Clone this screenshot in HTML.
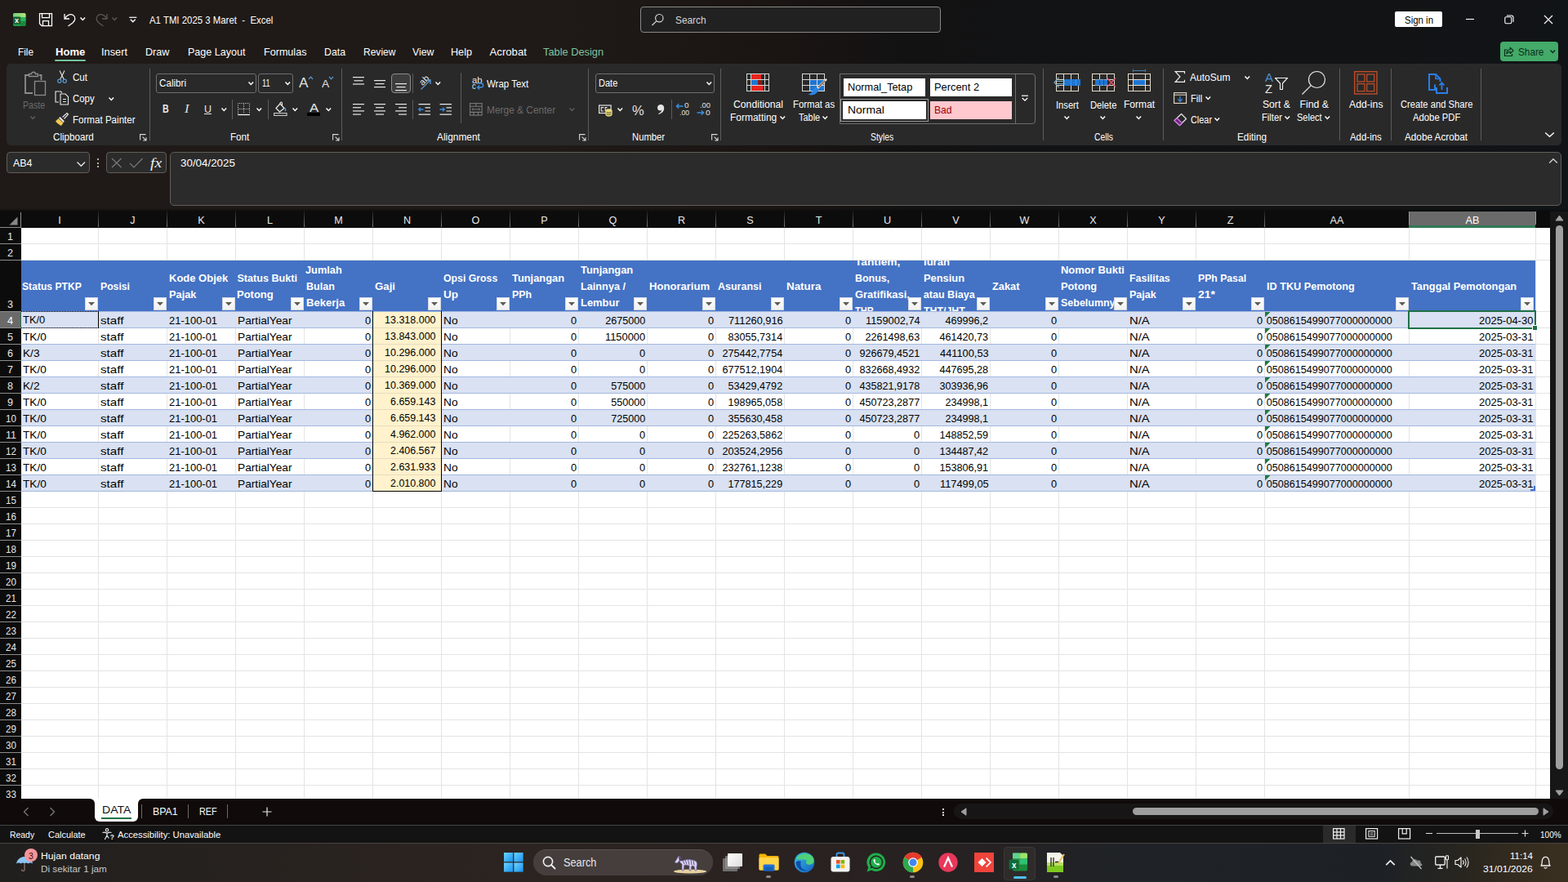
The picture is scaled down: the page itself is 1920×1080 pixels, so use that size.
<!DOCTYPE html>
<html lang="id"><head><meta charset="utf-8"><title>A1 TMI 2025 3 Maret - Excel</title>
<style>
html,body{margin:0;padding:0;}
body{width:1920px;height:1080px;overflow:hidden;position:relative;background:#1c1715;font-family:"Liberation Sans",sans-serif;}
.b{position:absolute;box-sizing:border-box;display:block;}
.t{position:absolute;white-space:pre;line-height:20px;transform-origin:0 50%;display:block;}
</style></head><body>
<div class="b" style="left:0;top:0;width:1920px;height:259px;background:linear-gradient(90deg,#1f1a17 0%,#1f1a17 35%,#1a1412 50%,#121213 58%,#111416 100%);"></div>
<svg class="b" style="left:16px;top:16px;" width="16" height="16" viewBox="0 0 16 16"><defs><linearGradient id="xg" x1="0" y1="0" x2="1" y2="0"><stop offset="0" stop-color="#6fd07a"/><stop offset="1" stop-color="#b4e37c"/></linearGradient></defs>
<rect x="0" y="0" width="15.5" height="16" rx="1.8" fill="#1f9a48"/>
<path d="M0 1.8 Q0 0 1.8 0 H13.7 Q15.5 0 15.5 1.8 V5 H0 Z" fill="url(#xg)"/>
<rect x="9" y="5" width="6.5" height="5" fill="#2fb35a"/>
<path d="M9 10 H15.5 V14.2 Q15.5 16 13.7 16 H9 Z" fill="#178a3e"/>
<rect x="0" y="4.6" width="9.2" height="9" rx="1" fill="#155f35"/></svg>
<span class="t" style="left:18.10px;top:15px;font-size:9px;color:#fff;font-weight:bold;">x</span>
<svg class="b" style="left:47px;top:15px;" width="18" height="18" viewBox="0 0 18 18"><path d="M1.5 1.5 H16.5 V16.5 H4 L1.5 14 Z" fill="none" stroke="#fff" stroke-width="1.25"/><path d="M4.5 1.5 V6.5 H13.5 V1.5 M5.5 16.5 V10.5 H12.5 V16.5" fill="none" stroke="#fff" stroke-width="1.25"/></svg>
<svg class="b" style="left:77px;top:15px;" width="17" height="18" viewBox="0 0 17 18"><path d="M2 2 V8 H8" fill="none" stroke="#fff" stroke-width="1.3"/><path d="M2.5 7.5 C5 3 9.5 1.5 12.5 3.5 C16 6 15.5 10 12 13 L6.5 17" fill="none" stroke="#fff" stroke-width="1.3"/></svg>
<svg class="b" style="left:97.0px;top:20.3px;" width="8.6" height="6" viewBox="0 0 8.6 6"><path d="M1.5 1.54 L4.3 4.46 L7.1 1.54" fill="none" stroke="#fff" stroke-width="1.45" stroke-linecap="butt" stroke-linejoin="miter"/></svg>
<svg class="b" style="left:116px;top:15px;" width="17" height="18" viewBox="0 0 17 18"><path d="M15 2 V8 H9" fill="none" stroke="#5a5754" stroke-width="1.3"/><path d="M14.5 7.5 C12 3 7.5 1.5 4.5 3.5 C1 6 1.5 10 5 13 L10.5 17" fill="none" stroke="#5a5754" stroke-width="1.3"/></svg>
<svg class="b" style="left:136.2px;top:20.3px;" width="8.6" height="6" viewBox="0 0 8.6 6"><path d="M1.5 1.54 L4.3 4.46 L7.1 1.54" fill="none" stroke="#5a5754" stroke-width="1.45" stroke-linecap="butt" stroke-linejoin="miter"/></svg>
<svg class="b" style="left:157px;top:19px;" width="12" height="9" viewBox="0 0 12 9"><path d="M1.2 2.3 H10.3" stroke="#fff" stroke-width="1.2" fill="none"/><path d="M2.8 4.8 L5.75 7.7 L8.7 4.8" stroke="#fff" stroke-width="1.4" fill="none"/></svg>
<span class="t" style="left:182.70px;top:15px;font-size:12.8px;color:#fff;transform:scaleX(0.8911);">A1 TMI 2025 3 Maret  -  Excel</span>
<div class="b" style="left:784px;top:8px;width:368px;height:32px;border:1px solid #8a8886;border-radius:4px;background:#212121;"></div>
<svg class="b" style="left:797px;top:16px;" width="17" height="17" viewBox="0 0 17 17"><circle cx="10.3" cy="6.2" r="4.7" fill="none" stroke="#d6d6d6" stroke-width="1.2"/><path d="M7 9.6 L1.5 15" stroke="#d6d6d6" stroke-width="1.3" fill="none"/></svg>
<span class="t" style="left:826.70px;top:15px;font-size:13.2px;color:#d6d6d6;transform:scaleX(0.8993);">Search</span>
<div class="b" style="left:1708px;top:14px;width:58px;height:19px;background:#fff;border-radius:2px;"></div>
<span class="t" style="left:1719.50px;top:15px;font-size:12.3px;color:#000;transform:scaleX(0.9307);">Sign in</span>
<svg class="b" style="left:1794px;top:22px;" width="12" height="3" viewBox="0 0 12 3"><path d="M1 1.5 H11" stroke="#fff" stroke-width="1.1"/></svg>
<svg class="b" style="left:1842px;top:18px;" width="12" height="12" viewBox="0 0 12 12"><rect x="0.8" y="2.8" width="8" height="8" rx="1.5" fill="none" stroke="#fff" stroke-width="1.1"/><path d="M3 1 H8.5 Q11 1 11 3.5 V9" fill="none" stroke="#fff" stroke-width="1.1"/></svg>
<svg class="b" style="left:1890px;top:18px;" width="12" height="12" viewBox="0 0 12 12"><path d="M1 1 L11 11 M11 1 L1 11" stroke="#fff" stroke-width="1.1"/></svg>
<span class="t" style="left:22.00px;top:54px;font-size:13.2px;color:#fff;transform:scaleX(0.8926);">File</span>
<span class="t" style="left:124.00px;top:54px;font-size:13.2px;color:#fff;transform:scaleX(0.9697);">Insert</span>
<span class="t" style="left:177.50px;top:54px;font-size:13.2px;color:#fff;transform:scaleX(0.9561);">Draw</span>
<span class="t" style="left:229.50px;top:54px;font-size:13.2px;color:#fff;transform:scaleX(0.9512);">Page Layout</span>
<span class="t" style="left:322.50px;top:54px;font-size:13.2px;color:#fff;transform:scaleX(0.9544);">Formulas</span>
<span class="t" style="left:396.50px;top:54px;font-size:13.2px;color:#fff;transform:scaleX(0.9324);">Data</span>
<span class="t" style="left:444.50px;top:54px;font-size:13.2px;color:#fff;transform:scaleX(0.9116);">Review</span>
<span class="t" style="left:504.50px;top:54px;font-size:13.2px;color:#fff;transform:scaleX(0.9327);">View</span>
<span class="t" style="left:551.50px;top:54px;font-size:13.2px;color:#fff;transform:scaleX(0.9573);">Help</span>
<span class="t" style="left:599.50px;top:54px;font-size:13.2px;color:#fff;">Acrobat</span>
<span class="t" style="left:67.70px;top:54px;font-size:13.2px;color:#fff;font-weight:bold;transform:scaleX(0.9901);">Home</span>
<div class="b" style="left:67px;top:72.6px;width:38px;height:2.6px;background:#74c39b;border-radius:1.3px;"></div>
<span class="t" style="left:665.30px;top:54px;font-size:13.2px;color:#7fc49f;transform:scaleX(0.9721);">Table Design</span>
<div class="b" style="left:1837px;top:51px;width:71px;height:24px;background:#43aa69;border-radius:4px;"></div>
<svg class="b" style="left:1841px;top:56px;" width="13" height="14" viewBox="0 0 13 14"><path d="M4.5 5 H1.5 V12.5 H10.5 V10" fill="none" stroke="#0b2e1a" stroke-width="1.2"/><path d="M3.8 10 C4 6.5 6 4.8 8.2 4.8 V2.2 L12 6 L8.2 9.6 V7.2 C6.5 7.2 5 8 3.8 10 Z" fill="none" stroke="#0b2e1a" stroke-width="1.1" stroke-linejoin="round"/></svg>
<span class="t" style="left:1858.80px;top:54px;font-size:13.2px;color:#0b2e1a;transform:scaleX(0.8918);">Share</span>
<svg class="b" style="left:1896.5px;top:60px;" width="8.6" height="6" viewBox="0 0 8.6 6"><path d="M1.5 1.54 L4.3 4.46 L7.1 1.54" fill="none" stroke="#0b2e1a" stroke-width="1.45" stroke-linecap="butt" stroke-linejoin="miter"/></svg>
<div class="b" style="left:8px;top:78px;width:1904px;height:100px;background:#292929;border-radius:5px;"></div>
<svg class="b" style="left:28px;top:87px;" width="29" height="32" viewBox="0 0 29 32"><path d="M8 5 H3 V27 H12" fill="none" stroke="#8c8c8c" stroke-width="1.8"/><path d="M20 5 H22.5 V11" fill="none" stroke="#8c8c8c" stroke-width="1.8"/><path d="M7.5 6.5 V3.5 H10.5 C10.5 0.5 15.5 0.5 15.5 3.5 H18.5 V6.5 Z" fill="none" stroke="#8c8c8c" stroke-width="1.4"/><rect x="14.5" y="12.5" width="13" height="17" fill="none" stroke="#8c8c8c" stroke-width="1.3"/></svg>
<span class="t" style="left:27.90px;top:119px;font-size:12.3px;color:#6b6b6b;transform:scaleX(0.8615);">Paste</span>
<svg class="b" style="left:36.2px;top:141.3px;" width="8.6" height="6" viewBox="0 0 8.6 6"><path d="M1.5 1.54 L4.3 4.46 L7.1 1.54" fill="none" stroke="#5e5e5e" stroke-width="1.45" stroke-linecap="butt" stroke-linejoin="miter"/></svg>
<svg class="b" style="left:70px;top:86px;" width="12" height="17" viewBox="0 0 12 17"><path d="M3 0.5 L8.2 11 M9 0.5 L3.8 11" stroke="#e8e8e8" stroke-width="1.1" fill="none"/><circle cx="2.8" cy="13.3" r="2.1" fill="none" stroke="#5b9bd5" stroke-width="1.2"/><circle cx="9.2" cy="13.3" r="2.1" fill="none" stroke="#5b9bd5" stroke-width="1.2"/></svg>
<span class="t" style="left:89.00px;top:85px;font-size:12.3px;color:#fff;transform:scaleX(0.9411);">Cut</span>
<svg class="b" style="left:67px;top:111px;" width="18" height="18" viewBox="0 0 18 18"><path d="M5 14 H1 V1 H7.5 L9 2.5" fill="none" stroke="#e8e8e8" stroke-width="1.1"/><path d="M7 4 H13 L16.5 7.5 V17 H7 Z" fill="none" stroke="#e8e8e8" stroke-width="1.1"/><path d="M10 10.5 H14 M10 13.5 H14" stroke="#e8e8e8" stroke-width="1.1"/></svg>
<span class="t" style="left:89.00px;top:111px;font-size:12.3px;color:#fff;transform:scaleX(0.9262);">Copy</span>
<svg class="b" style="left:131.89999999999998px;top:117.5px;" width="8.6" height="6" viewBox="0 0 8.6 6"><path d="M1.5 1.54 L4.3 4.46 L7.1 1.54" fill="none" stroke="#fff" stroke-width="1.45" stroke-linecap="butt" stroke-linejoin="miter"/></svg>
<svg class="b" style="left:67px;top:137px;" width="18" height="18" viewBox="0 0 18 18"><path d="M9.5 6.5 L15 1.5 L16.5 3 L11.5 8.5" fill="none" stroke="#e8e8e8" stroke-width="1.2"/><path d="M6.5 6 L12 11.5 L10.5 13 L5 7.5 Z" fill="#e8e8e8"/><path d="M4.5 8 L1 11.5 C3 14 5.5 16 8 17 L10.5 13.5 Z" fill="#f2c94c"/></svg>
<span class="t" style="left:89.00px;top:137px;font-size:12.3px;color:#fff;transform:scaleX(0.9418);">Format Painter</span>
<span class="t" style="left:64.60px;top:158px;font-size:12.3px;color:#fff;transform:scaleX(0.9460);">Clipboard</span>
<svg class="b" style="left:171px;top:164px;" width="9" height="9" viewBox="0 0 9 9"><path d="M0.6 7.5 V0.6 H7.5 M8 4.2 V8 H4.2 M8 8 L3.6 3.6" fill="none" stroke="#d8d8d8" stroke-width="1.1"/></svg>
<div class="b" style="left:183px;top:84px;width:1px;height:88px;background:#5c5c5c;"></div>
<div class="b" style="left:191px;top:90px;width:123px;height:24px;border:1px solid #6e6e6e;border-radius:3px;background:#292929;"></div>
<span class="t" style="left:195.00px;top:92px;font-size:12.3px;color:#fff;transform:scaleX(0.9464);">Calibri</span>
<svg class="b" style="left:303.0px;top:99.3px;" width="8.6" height="6" viewBox="0 0 8.6 6"><path d="M1.5 1.54 L4.3 4.46 L7.1 1.54" fill="none" stroke="#fff" stroke-width="1.45" stroke-linecap="butt" stroke-linejoin="miter"/></svg>
<div class="b" style="left:316px;top:90px;width:43px;height:24px;border:1px solid #6e6e6e;border-radius:3px;background:#292929;"></div>
<span class="t" style="left:320.50px;top:92px;font-size:12.3px;color:#fff;transform:scaleX(0.7444);">11</span>
<svg class="b" style="left:348.0px;top:99.3px;" width="8.6" height="6" viewBox="0 0 8.6 6"><path d="M1.5 1.54 L4.3 4.46 L7.1 1.54" fill="none" stroke="#fff" stroke-width="1.45" stroke-linecap="butt" stroke-linejoin="miter"/></svg>
<span class="t" style="left:366.30px;top:91px;font-size:17.4px;color:#e0e0e0;transform:scaleX(0.9901);">A</span>
<svg class="b" style="left:377px;top:93px;" width="7" height="5" viewBox="0 0 7 5"><path d="M1 4 L3.5 1.2 L6 4" fill="none" stroke="#5b9bd5" stroke-width="1.2"/></svg>
<span class="t" style="left:393.80px;top:93px;font-size:12.8px;color:#e0e0e0;transform:scaleX(1.0768);">A</span>
<svg class="b" style="left:402px;top:93px;" width="7" height="5" viewBox="0 0 7 5"><path d="M1 1 L3.5 3.8 L6 1" fill="none" stroke="#5b9bd5" stroke-width="1.2"/></svg>
<span class="t" style="left:199.30px;top:123px;font-size:14px;color:#e8e8e8;font-weight:bold;transform:scaleX(0.7612);">B</span>
<span class="t" style="left:225.88px;top:123px;font-size:14.5px;color:#e0e0e0;font-style:italic;font-family:'Liberation Serif',serif;transform:scaleX(1.1327);">I</span>
<span class="t" style="left:250.00px;top:124px;font-size:13.5px;color:#e8e8e8;transform:scaleX(0.9227);">U</span>
<div class="b" style="left:250px;top:139px;width:9px;height:1px;background:#e8e8e8;"></div>
<svg class="b" style="left:269.5px;top:131.3px;" width="8.6" height="6" viewBox="0 0 8.6 6"><path d="M1.5 1.54 L4.3 4.46 L7.1 1.54" fill="none" stroke="#fff" stroke-width="1.45" stroke-linecap="butt" stroke-linejoin="miter"/></svg>
<div class="b" style="left:284px;top:122px;width:1px;height:24px;background:#5c5c5c;"></div>
<svg class="b" style="left:291px;top:126px;" width="16" height="16" viewBox="0 0 16 16"><path d="M0.5 13 V0.5 H14.5 V13" fill="none" stroke="#d8d8d8" stroke-width="1" stroke-dasharray="1 1.33"/><path d="M7.5 1.5 V13 M1.5 7.5 H14" stroke="#d8d8d8" stroke-width="1" stroke-dasharray="1 1.33"/><path d="M0 14.5 H15" stroke="#fff" stroke-width="1.2"/></svg>
<svg class="b" style="left:313.2px;top:131.3px;" width="8.6" height="6" viewBox="0 0 8.6 6"><path d="M1.5 1.54 L4.3 4.46 L7.1 1.54" fill="none" stroke="#fff" stroke-width="1.45" stroke-linecap="butt" stroke-linejoin="miter"/></svg>
<div class="b" style="left:328px;top:122px;width:1px;height:24px;background:#5c5c5c;"></div>
<svg class="b" style="left:335px;top:124px;" width="17" height="18" viewBox="0 0 17 18"><path d="M8 3 L13 8.5 L7.5 13 L3 8.5 Z" fill="none" stroke="#e8e8e8" stroke-width="1.2" stroke-linejoin="round"/><path d="M8 3 C8 0.5 10.5 0.5 10.5 3 V5.5" fill="none" stroke="#e8e8e8" stroke-width="1.1"/><path d="M13.5 8 C15 10 15 11.5 13.8 12" fill="none" stroke="#5b9bd5" stroke-width="1.4"/><rect x="0.6" y="14.6" width="15.5" height="2.8" fill="none" stroke="#d8d8d8" stroke-width="1"/></svg>
<svg class="b" style="left:357.2px;top:131.3px;" width="8.6" height="6" viewBox="0 0 8.6 6"><path d="M1.5 1.54 L4.3 4.46 L7.1 1.54" fill="none" stroke="#fff" stroke-width="1.45" stroke-linecap="butt" stroke-linejoin="miter"/></svg>
<span class="t" style="left:378.80px;top:122px;font-size:14.5px;color:#e8e8e8;transform:scaleX(1.1572);">A</span>
<div class="b" style="left:376px;top:138px;width:16px;height:4px;background:#000;"></div>
<svg class="b" style="left:398.2px;top:131.3px;" width="8.6" height="6" viewBox="0 0 8.6 6"><path d="M1.5 1.54 L4.3 4.46 L7.1 1.54" fill="none" stroke="#fff" stroke-width="1.45" stroke-linecap="butt" stroke-linejoin="miter"/></svg>
<span class="t" style="left:281.70px;top:158px;font-size:12.3px;color:#fff;transform:scaleX(0.9472);">Font</span>
<svg class="b" style="left:407px;top:164px;" width="9" height="9" viewBox="0 0 9 9"><path d="M0.6 7.5 V0.6 H7.5 M8 4.2 V8 H4.2 M8 8 L3.6 3.6" fill="none" stroke="#d8d8d8" stroke-width="1.1"/></svg>
<div class="b" style="left:418px;top:84px;width:1px;height:88px;background:#5c5c5c;"></div>
<svg class="b" style="left:432px;top:94px;" width="14" height="12.600000000000001" viewBox="0 0 14 12.600000000000001"><rect x="0" y="0.0" width="14" height="1.2" fill="#e8e8e8"/><rect x="1.5" y="4.2" width="11" height="1.2" fill="#e8e8e8"/><rect x="0" y="8.4" width="14" height="1.2" fill="#e8e8e8"/></svg>
<svg class="b" style="left:458px;top:98px;" width="14" height="12" viewBox="0 0 14 12"><rect x="0" y="0" width="14" height="1.2" fill="#e8e8e8"/><rect x="1.5" y="4" width="11" height="1.2" fill="#e8e8e8"/><rect x="0" y="8" width="14" height="1.2" fill="#e8e8e8"/></svg>
<div class="b" style="left:479px;top:90px;width:24px;height:24px;border:1px solid #8c8c8c;border-radius:4px;background:#3d3d3d;"></div>
<svg class="b" style="left:484px;top:101.5px;" width="14" height="12" viewBox="0 0 14 12"><rect x="0" y="0" width="14" height="1.2" fill="#e8e8e8"/><rect x="1.5" y="4" width="11" height="1.2" fill="#e8e8e8"/><rect x="0" y="8" width="14" height="1.2" fill="#e8e8e8"/></svg>
<div class="b" style="left:505px;top:90px;width:1px;height:24px;background:#5c5c5c;"></div>
<span class="t" style="left:513px;top:88px;font-size:11px;color:#e8e8e8;transform:rotate(-45deg);transform-origin:50% 50%;">ab</span>
<svg class="b" style="left:514px;top:96px;" width="15" height="15" viewBox="0 0 15 15"><path d="M1.5 13.5 L13 2 M8 2 H13 V7" fill="none" stroke="#5b9bd5" stroke-width="1.3"/></svg>
<svg class="b" style="left:532.2px;top:99.3px;" width="8.6" height="6" viewBox="0 0 8.6 6"><path d="M1.5 1.54 L4.3 4.46 L7.1 1.54" fill="none" stroke="#fff" stroke-width="1.45" stroke-linecap="butt" stroke-linejoin="miter"/></svg>
<svg class="b" style="left:432px;top:127px;" width="14" height="16.6" viewBox="0 0 14 16.6"><rect x="0" y="0.0" width="14" height="1.2" fill="#e8e8e8"/><rect x="0" y="4.15" width="10" height="1.2" fill="#e8e8e8"/><rect x="0" y="8.3" width="14" height="1.2" fill="#e8e8e8"/><rect x="0" y="12.450000000000001" width="10" height="1.2" fill="#e8e8e8"/></svg>
<svg class="b" style="left:458px;top:127px;" width="14" height="16.6" viewBox="0 0 14 16.6"><rect x="0" y="0.0" width="14" height="1.2" fill="#e8e8e8"/><rect x="2" y="4.15" width="10" height="1.2" fill="#e8e8e8"/><rect x="0" y="8.3" width="14" height="1.2" fill="#e8e8e8"/><rect x="2" y="12.450000000000001" width="10" height="1.2" fill="#e8e8e8"/></svg>
<svg class="b" style="left:484px;top:127px;" width="14" height="16.6" viewBox="0 0 14 16.6"><rect x="0" y="0.0" width="14" height="1.2" fill="#e8e8e8"/><rect x="4" y="4.15" width="10" height="1.2" fill="#e8e8e8"/><rect x="0" y="8.3" width="14" height="1.2" fill="#e8e8e8"/><rect x="4" y="12.450000000000001" width="10" height="1.2" fill="#e8e8e8"/></svg>
<div class="b" style="left:505px;top:122px;width:1px;height:24px;background:#5c5c5c;"></div>
<svg class="b" style="left:512px;top:127px;" width="16" height="14" viewBox="0 0 16 14"><path d="M0.5 0.6 H15 M8.5 4.8 H15 M8.5 9 H15 M0.5 13.2 H15" stroke="#e8e8e8" stroke-width="1.2"/><path d="M6.5 7 H0.8 M3 4.6 L0.6 7 L3 9.4" fill="none" stroke="#3b8fe0" stroke-width="1.3"/></svg>
<svg class="b" style="left:538px;top:127px;" width="16" height="14" viewBox="0 0 16 14"><path d="M0.5 0.6 H15 M8.5 4.8 H15 M8.5 9 H15 M0.5 13.2 H15" stroke="#e8e8e8" stroke-width="1.2"/><path d="M0.5 7 H6.2 M4 4.6 L6.4 7 L4 9.4" fill="none" stroke="#3b8fe0" stroke-width="1.3"/></svg>
<div class="b" style="left:564px;top:89px;width:1px;height:62px;background:#5c5c5c;"></div>
<span class="t" style="left:577.50px;top:89px;font-size:10px;color:#e8e8e8;transform:scaleX(1.1236);">ab</span>
<span class="t" style="left:577.80px;top:96px;font-size:10px;color:#e8e8e8;transform:scaleX(0.9400);">c</span>
<svg class="b" style="left:583px;top:101px;" width="10" height="9" viewBox="0 0 10 9"><path d="M0.5 1 H6 C9.5 1 9.5 6 6 6 H2 M4.2 3.6 L1.6 6 L4.2 8.4" fill="none" stroke="#3b8fe0" stroke-width="1.3"/></svg>
<span class="t" style="left:595.80px;top:93px;font-size:12.3px;color:#fff;transform:scaleX(0.9323);">Wrap Text</span>
<svg class="b" style="left:575px;top:126px;" width="16" height="16" viewBox="0 0 16 16"><rect x="0.6" y="0.6" width="14.5" height="14.5" fill="none" stroke="#7a7a7a" stroke-width="1.1"/><path d="M0.6 4.2 H15 M0.6 11.4 H15 M7.8 0.6 V4.2 M5 11.4 V15 M10.5 11.4 V15" stroke="#7a7a7a" stroke-width="1.1" fill="none"/><path d="M3 7.8 H12.5 M4.6 6.2 L3 7.8 L4.6 9.4 M11 6.2 L12.6 7.8 L11 9.4" stroke="#7a7a7a" stroke-width="1" fill="none"/></svg>
<span class="t" style="left:595.80px;top:125px;font-size:12.3px;color:#6b6b6b;transform:scaleX(0.9696);">Merge &amp; Center</span>
<svg class="b" style="left:696.2px;top:131.3px;" width="8.6" height="6" viewBox="0 0 8.6 6"><path d="M1.5 1.54 L4.3 4.46 L7.1 1.54" fill="none" stroke="#5e5e5e" stroke-width="1.45" stroke-linecap="butt" stroke-linejoin="miter"/></svg>
<span class="t" style="left:535.20px;top:158px;font-size:12.3px;color:#fff;transform:scaleX(0.9652);">Alignment</span>
<svg class="b" style="left:709px;top:164px;" width="9" height="9" viewBox="0 0 9 9"><path d="M0.6 7.5 V0.6 H7.5 M8 4.2 V8 H4.2 M8 8 L3.6 3.6" fill="none" stroke="#d8d8d8" stroke-width="1.1"/></svg>
<div class="b" style="left:720px;top:84px;width:1px;height:88px;background:#5c5c5c;"></div>
<div class="b" style="left:729px;top:90px;width:146px;height:24px;border:1px solid #6e6e6e;border-radius:3px;background:#292929;"></div>
<span class="t" style="left:732.70px;top:92px;font-size:12.3px;color:#fff;transform:scaleX(0.8967);">Date</span>
<svg class="b" style="left:863.7px;top:99.3px;" width="8.6" height="6" viewBox="0 0 8.6 6"><path d="M1.5 1.54 L4.3 4.46 L7.1 1.54" fill="none" stroke="#fff" stroke-width="1.45" stroke-linecap="butt" stroke-linejoin="miter"/></svg>
<svg class="b" style="left:733px;top:128px;" width="17" height="15" viewBox="0 0 17 15"><rect x="0.6" y="1" width="14.5" height="9.5" fill="none" stroke="#e8e8e8" stroke-width="1.2"/><path d="M6.3 3.6 H3.2 V8 H6.3 M10.5 3.6 H8.2 V8 H9" fill="none" stroke="#e8e8e8" stroke-width="1.1"/><path d="M8.8 7.2 C8.8 5.2 16.2 5.2 16.2 7.2 V12.6 C16.2 14.8 8.8 14.8 8.8 12.6 Z" fill="#eadd7c" stroke="#eadd7c" stroke-width="0.8"/><path d="M9.6 9.3 C11 10.3 14 10.3 15.4 9.3 M9.6 11.6 C11 12.6 14 12.6 15.4 11.6" fill="none" stroke="#3a3520" stroke-width="0.9"/></svg>
<svg class="b" style="left:755.2px;top:131.3px;" width="8.6" height="6" viewBox="0 0 8.6 6"><path d="M1.5 1.54 L4.3 4.46 L7.1 1.54" fill="none" stroke="#fff" stroke-width="1.45" stroke-linecap="butt" stroke-linejoin="miter"/></svg>
<span class="t" style="left:774.30px;top:126px;font-size:17px;color:#e0e0e0;transform:scaleX(0.9716);">%</span>
<svg class="b" style="left:804px;top:127px;" width="10" height="14" viewBox="0 0 10 14"><path d="M5.2 1 C7.8 1 9.2 3 9.2 5.6 C9.2 9.2 6.6 12 2.6 13 L2.2 12 C4.6 11 6 9.6 6.2 7.8 C5.6 8.2 5 8.4 4.4 8.4 C2.4 8.4 1 7 1 4.9 C1 2.7 2.8 1 5.2 1 Z" fill="#e4e4e4"/></svg>
<div class="b" style="left:822px;top:122px;width:1px;height:24px;background:#5c5c5c;"></div>
<span class="t" style="left:838.00px;top:119px;font-size:9.5px;color:#e0e0e0;transform:scaleX(1.0431);">0</span>
<span class="t" style="left:831.50px;top:128px;font-size:9.5px;color:#e0e0e0;transform:scaleX(0.9087);">.00</span>
<svg class="b" style="left:827px;top:126px;" width="10" height="8" viewBox="0 0 10 8"><path d="M9.5 4 H1.5 M4.3 1.2 L1.3 4 L4.3 6.8" fill="none" stroke="#3b8fe0" stroke-width="1.3"/></svg>
<span class="t" style="left:857.00px;top:119px;font-size:9.5px;color:#e0e0e0;transform:scaleX(0.9845);">.00</span>
<span class="t" style="left:864.30px;top:128px;font-size:9.5px;color:#e0e0e0;transform:scaleX(1.0811);">0</span>
<svg class="b" style="left:853px;top:134px;" width="10" height="8" viewBox="0 0 10 8"><path d="M0.5 4 H8.5 M5.7 1.2 L8.7 4 L5.7 6.8" fill="none" stroke="#3b8fe0" stroke-width="1.3"/></svg>
<span class="t" style="left:773.70px;top:158px;font-size:12.3px;color:#fff;transform:scaleX(0.9153);">Number</span>
<svg class="b" style="left:871px;top:164px;" width="9" height="9" viewBox="0 0 9 9"><path d="M0.6 7.5 V0.6 H7.5 M8 4.2 V8 H4.2 M8 8 L3.6 3.6" fill="none" stroke="#d8d8d8" stroke-width="1.1"/></svg>
<div class="b" style="left:882px;top:84px;width:1px;height:88px;background:#5c5c5c;"></div>
<svg class="b" style="left:914px;top:90px;" width="29" height="23" viewBox="0 0 29 23"><rect x="6" y="0.5" width="12" height="7" fill="#e8231f"/><rect x="6" y="7.5" width="8" height="7" fill="#1f76d2"/><rect x="14" y="7.5" width="5" height="7" fill="#8a1a14"/><rect x="6" y="14.5" width="14.5" height="7" fill="#e8231f"/>
<rect x="0.5" y="0.5" width="27" height="21" fill="none" stroke="#d8d8d8" stroke-width="1"/>
<path d="M1 7.5 H27 M1 14.5 H27 M5.5 1 V21 M22.5 1 V21" stroke="#d8d8d8" stroke-width="1" fill="none"/></svg>
<span class="t" style="left:897.70px;top:118px;font-size:12.3px;color:#fff;transform:scaleX(0.9922);">Conditional</span>
<span class="t" style="left:894.00px;top:134px;font-size:12.3px;color:#fff;transform:scaleX(0.9737);">Formatting</span>
<svg class="b" style="left:954.2px;top:141px;" width="8.6" height="6" viewBox="0 0 8.6 6"><path d="M1.5 1.54 L4.3 4.46 L7.1 1.54" fill="none" stroke="#fff" stroke-width="1.45" stroke-linecap="butt" stroke-linejoin="miter"/></svg>
<svg class="b" style="left:982px;top:90px;" width="31" height="28" viewBox="0 0 31 28"><rect x="10" y="7.5" width="17.5" height="14" fill="#1f76d2"/>
<rect x="0.5" y="0.5" width="27" height="21" fill="none" stroke="#d8d8d8" stroke-width="1"/>
<path d="M1 7.5 H27 M1 14.5 H27 M9.5 1 V21 M18.5 1 V21" stroke="#d8d8d8" stroke-width="1" fill="none"/>
<path d="M29.3 7.6 L18.5 18.5" stroke="#efe6dc" stroke-width="2.6" stroke-linecap="round"/><path d="M28 9 L20.5 16.5" stroke="#7a4a2a" stroke-width="1.1" stroke-linecap="round"/>
<path d="M18 16.5 C14.5 17 13.5 20 12.5 22 C11.5 24 9.5 25 7.5 25.5 C12 27.5 18 26.5 20.5 19.5 Z" fill="#2a86e6"/></svg>
<span class="t" style="left:970.80px;top:118px;font-size:12.3px;color:#fff;transform:scaleX(0.9232);">Format as</span>
<span class="t" style="left:978.20px;top:134px;font-size:12.3px;color:#fff;transform:scaleX(0.8912);">Table</span>
<svg class="b" style="left:1006.3000000000001px;top:141px;" width="8.6" height="6" viewBox="0 0 8.6 6"><path d="M1.5 1.54 L4.3 4.46 L7.1 1.54" fill="none" stroke="#fff" stroke-width="1.45" stroke-linecap="butt" stroke-linejoin="miter"/></svg>
<div class="b" style="left:1028px;top:90px;width:240px;height:62px;border:1px solid #6e6e6e;border-radius:0 4px 4px 0;"></div>
<div class="b" style="left:1243px;top:90px;width:1px;height:62px;background:#6e6e6e;"></div>
<div class="b" style="left:1033px;top:96px;width:100px;height:22px;background:#fff;"></div>
<div class="b" style="left:1139px;top:96px;width:100px;height:22px;background:#fff;"></div>
<div class="b" style="left:1029px;top:121px;width:108px;height:28px;border:1px solid #9a9a9a;"></div>
<div class="b" style="left:1032px;top:124px;width:102px;height:22px;background:#fff;"></div>
<div class="b" style="left:1139px;top:124px;width:100px;height:22px;background:#ffc7ce;"></div>
<span class="t" style="left:1037.70px;top:97px;font-size:13.3px;color:#000;transform:scaleX(0.9578);">Normal_Tetap</span>
<span class="t" style="left:1143.70px;top:97px;font-size:13.3px;color:#000;transform:scaleX(0.9671);">Percent 2</span>
<span class="t" style="left:1037.70px;top:125px;font-size:13.3px;color:#000;transform:scaleX(1.0453);">Normal</span>
<span class="t" style="left:1143.70px;top:125px;font-size:13.3px;color:#9c0006;transform:scaleX(0.9103);">Bad</span>
<svg class="b" style="left:1250px;top:116px;" width="10" height="9" viewBox="0 0 10 9"><path d="M1 1.2 H9" stroke="#fff" stroke-width="1.2" fill="none"/><path d="M1.8 4 L5 7.2 L8.2 4" stroke="#fff" stroke-width="1.3" fill="none"/></svg>
<span class="t" style="left:1066.20px;top:158px;font-size:12.3px;color:#fff;transform:scaleX(0.8421);">Styles</span>
<div class="b" style="left:1277px;top:84px;width:1px;height:88px;background:#5c5c5c;"></div>
<svg class="b" style="left:1289px;top:90px;" width="36" height="23" viewBox="0 0 36 23"><rect x="4.5" y="0.5" width="27" height="21" fill="none" stroke="#e8dccc" stroke-width="1"/><path d="M4.5 7.5 H31.5 M4.5 14.5 H31.5 M13.5 0.5 V21.5 M22.5 0.5 V21.5" stroke="#e8dccc" stroke-width="1" fill="none"/>
<rect x="14" y="7" width="20" height="8" fill="#1f76d2"/><path d="M22.5 7 V15 M28.5 7 V15" stroke="#3f92e8" stroke-width="1"/>
<path d="M15 9.5 H5 M15 12.5 H5 M7.5 5 L2 11 L7.5 17" fill="none" stroke="#7aaec6" stroke-width="1.2"/></svg>
<span class="t" style="left:1292.70px;top:119px;font-size:12.3px;color:#fff;transform:scaleX(0.9073);">Insert</span>
<svg class="b" style="left:1302.0px;top:141.3px;" width="8.6" height="6" viewBox="0 0 8.6 6"><path d="M1.5 1.54 L4.3 4.46 L7.1 1.54" fill="none" stroke="#fff" stroke-width="1.45" stroke-linecap="butt" stroke-linejoin="miter"/></svg>
<svg class="b" style="left:1336px;top:90px;" width="32" height="23" viewBox="0 0 32 23"><rect x="1.5" y="0.5" width="27" height="21" fill="none" stroke="#e8dccc" stroke-width="1"/><path d="M1.5 7.5 H28.5 M1.5 14.5 H28.5 M10.5 0.5 V21.5 M19.5 0.5 V21.5" stroke="#e8dccc" stroke-width="1" fill="none"/>
<rect x="5" y="7.5" width="15" height="7" fill="#1f76d2"/><path d="M10.5 7.5 V14.5 M15.5 7.5 V14.5" stroke="#0b4f9e" stroke-width="1"/>
<path d="M19.5 5.5 L30 16.5 M30 5.5 L19.5 16.5" stroke="#e05570" stroke-width="1.4"/></svg>
<span class="t" style="left:1334.60px;top:119px;font-size:12.3px;color:#fff;transform:scaleX(0.9115);">Delete</span>
<svg class="b" style="left:1346.3px;top:141.3px;" width="8.6" height="6" viewBox="0 0 8.6 6"><path d="M1.5 1.54 L4.3 4.46 L7.1 1.54" fill="none" stroke="#fff" stroke-width="1.45" stroke-linecap="butt" stroke-linejoin="miter"/></svg>
<svg class="b" style="left:1381px;top:84px;" width="29" height="29" viewBox="0 0 29 29"><path d="M6.5 2.5 H21.5 M6.5 0.5 V4.5 M21.5 0.5 V4.5" stroke="#3c7eae" stroke-width="1" fill="none"/><rect x="0.5" y="6.5" width="27" height="21" fill="none" stroke="#e8dccc" stroke-width="1"/><path d="M0.5 13.5 H27.5 M0.5 20.5 H27.5 M6.5 6.5 V27.5 M21.5 6.5 V27.5" stroke="#e8dccc" stroke-width="1" fill="none"/>
<rect x="7" y="14" width="14" height="6" fill="#1f76d2"/></svg>
<span class="t" style="left:1376.20px;top:118px;font-size:12.3px;color:#fff;transform:scaleX(0.9805);">Format</span>
<svg class="b" style="left:1390.1000000000001px;top:140.7px;" width="8.6" height="6" viewBox="0 0 8.6 6"><path d="M1.5 1.54 L4.3 4.46 L7.1 1.54" fill="none" stroke="#fff" stroke-width="1.45" stroke-linecap="butt" stroke-linejoin="miter"/></svg>
<span class="t" style="left:1339.60px;top:158px;font-size:12.3px;color:#fff;transform:scaleX(0.8377);">Cells</span>
<div class="b" style="left:1424px;top:84px;width:1px;height:88px;background:#5c5c5c;"></div>
<svg class="b" style="left:1438px;top:87px;" width="14" height="14" viewBox="0 0 14 14"><path d="M12.5 3.2 V0.6 H1.2 L7 7 L1.2 13.4 H12.5 V10.8" fill="none" stroke="#f0f0f0" stroke-width="1.15" stroke-linejoin="miter"/></svg>
<span class="t" style="left:1457.20px;top:85px;font-size:12.3px;color:#fff;transform:scaleX(0.9766);">AutoSum</span>
<svg class="b" style="left:1523.2px;top:91.5px;" width="8.6" height="6" viewBox="0 0 8.6 6"><path d="M1.5 1.54 L4.3 4.46 L7.1 1.54" fill="none" stroke="#fff" stroke-width="1.45" stroke-linecap="butt" stroke-linejoin="miter"/></svg>
<svg class="b" style="left:1437px;top:113px;" width="17" height="14" viewBox="0 0 17 14"><rect x="0.6" y="0.6" width="15" height="12.8" fill="none" stroke="#e8dccc" stroke-width="1.1"/><path d="M0.6 3.2 H15.6" stroke="#e8dccc" stroke-width="1"/><path d="M8 5 V11 M5.3 8.4 L8 11.2 L10.7 8.4" fill="none" stroke="#3b8fe0" stroke-width="1.3"/></svg>
<span class="t" style="left:1457.70px;top:111px;font-size:12.3px;color:#fff;transform:scaleX(0.9101);">Fill</span>
<svg class="b" style="left:1474.5px;top:117.3px;" width="8.6" height="6" viewBox="0 0 8.6 6"><path d="M1.5 1.54 L4.3 4.46 L7.1 1.54" fill="none" stroke="#fff" stroke-width="1.45" stroke-linecap="butt" stroke-linejoin="miter"/></svg>
<svg class="b" style="left:1436px;top:138px;" width="18" height="17" viewBox="0 0 18 17"><path d="M10.5 1.5 L16.5 7.5 L8.5 15.5 L2 9.5 Z" fill="none" stroke="#e8e8e8" stroke-width="1.2" stroke-linejoin="round"/><path d="M5.2 6.8 L11.5 12.8 L8.5 15.5 L2 9.5 Z" fill="#6a2a78" stroke="#d070e0" stroke-width="1.3" stroke-linejoin="round"/></svg>
<span class="t" style="left:1457.70px;top:137px;font-size:12.3px;color:#fff;transform:scaleX(0.8861);">Clear</span>
<svg class="b" style="left:1486.3px;top:143.3px;" width="8.6" height="6" viewBox="0 0 8.6 6"><path d="M1.5 1.54 L4.3 4.46 L7.1 1.54" fill="none" stroke="#fff" stroke-width="1.45" stroke-linecap="butt" stroke-linejoin="miter"/></svg>
<span class="t" style="left:1549.00px;top:85px;font-size:15px;color:#4a90d0;">A</span>
<span class="t" style="left:1549.00px;top:99px;font-size:15px;color:#e8e8e8;transform:scaleX(0.9836);">Z</span>
<svg class="b" style="left:1560px;top:94px;" width="18" height="17" viewBox="0 0 18 17"><path d="M1.5 1.5 H16.5 L10.5 8 V15.5 H7.5 V8 Z" fill="none" stroke="#f0f0f0" stroke-width="1.15" stroke-linejoin="round"/></svg>
<span class="t" style="left:1546.20px;top:118px;font-size:12.3px;color:#fff;transform:scaleX(0.9885);">Sort &amp;</span>
<span class="t" style="left:1545.00px;top:134px;font-size:12.3px;color:#fff;transform:scaleX(0.9145);">Filter</span>
<svg class="b" style="left:1572.2px;top:141px;" width="8.6" height="6" viewBox="0 0 8.6 6"><path d="M1.5 1.54 L4.3 4.46 L7.1 1.54" fill="none" stroke="#fff" stroke-width="1.45" stroke-linecap="butt" stroke-linejoin="miter"/></svg>
<svg class="b" style="left:1593px;top:86px;" width="32" height="32" viewBox="0 0 32 32"><circle cx="19.5" cy="11.5" r="10" fill="none" stroke="#e8e8e8" stroke-width="1.2"/><path d="M12.3 18.7 L1.5 29.5" stroke="#e8e8e8" stroke-width="1.2"/></svg>
<span class="t" style="left:1591.40px;top:118px;font-size:12.3px;color:#fff;">Find &amp;</span>
<span class="t" style="left:1588.20px;top:134px;font-size:12.3px;color:#fff;transform:scaleX(0.8934);">Select</span>
<svg class="b" style="left:1621.3px;top:141px;" width="8.6" height="6" viewBox="0 0 8.6 6"><path d="M1.5 1.54 L4.3 4.46 L7.1 1.54" fill="none" stroke="#fff" stroke-width="1.45" stroke-linecap="butt" stroke-linejoin="miter"/></svg>
<span class="t" style="left:1514.60px;top:158px;font-size:12.3px;color:#fff;transform:scaleX(0.9573);">Editing</span>
<div class="b" style="left:1640px;top:84px;width:1px;height:88px;background:#5c5c5c;"></div>
<svg class="b" style="left:1658px;top:87px;" width="29" height="29" viewBox="0 0 29 29"><rect x="0.7" y="0.7" width="27.3" height="27.3" fill="none" stroke="#c8502a" stroke-width="1.3"/><rect x="4" y="4" width="9" height="9" fill="none" stroke="#c8502a" stroke-width="1.2"/><rect x="15.7" y="4" width="9" height="9" fill="none" stroke="#c8502a" stroke-width="1.2"/><rect x="4" y="15.7" width="9" height="9" fill="none" stroke="#c8502a" stroke-width="1.2"/><rect x="15.7" y="15.7" width="9" height="9" fill="none" stroke="#c8502a" stroke-width="1.2"/></svg>
<span class="t" style="left:1651.50px;top:118px;font-size:12.3px;color:#fff;transform:scaleX(0.9953);">Add-ins</span>
<span class="t" style="left:1652.50px;top:158px;font-size:12.3px;color:#fff;transform:scaleX(0.9293);">Add-ins</span>
<div class="b" style="left:1703px;top:84px;width:1px;height:88px;background:#5c5c5c;"></div>
<svg class="b" style="left:1748px;top:89px;" width="26" height="27" viewBox="0 0 26 27"><path d="M9 14.5 V21 H2 V2 H10 L15.5 7.5 V11" fill="none" stroke="#2b7de9" stroke-width="2"/><path d="M10 2 V7.5 H15.5" fill="none" stroke="#2b7de9" stroke-width="1.6"/><path d="M11 18 V25 H24 V18" fill="none" stroke="#2b7de9" stroke-width="2"/><path d="M17.5 21 V12.5 M14.5 15.3 L17.5 12.2 L20.5 15.3" fill="none" stroke="#2b7de9" stroke-width="1.8"/></svg>
<span class="t" style="left:1714.60px;top:118px;font-size:12.3px;color:#fff;transform:scaleX(0.9103);">Create and Share</span>
<span class="t" style="left:1729.60px;top:134px;font-size:12.3px;color:#fff;transform:scaleX(0.9184);">Adobe PDF</span>
<span class="t" style="left:1720.20px;top:158px;font-size:12.3px;color:#fff;transform:scaleX(0.9549);">Adobe Acrobat</span>
<div class="b" style="left:1813px;top:84px;width:1px;height:88px;background:#5c5c5c;"></div>
<svg class="b" style="left:1891px;top:161px;" width="13" height="8" viewBox="0 0 13 8"><path d="M1.2 1.5 L6.5 6.2 L11.8 1.5" fill="none" stroke="#fff" stroke-width="1.4"/></svg>
<div class="b" style="left:8px;top:186px;width:102px;height:26px;border:1px solid #625d58;border-radius:4px;background:#2b2b2b;"></div>
<span class="t" style="left:15.50px;top:190px;font-size:13.2px;color:#fff;transform:scaleX(0.9420);">AB4</span>
<svg class="b" style="left:93px;top:197px;" width="13" height="8" viewBox="0 0 13 8"><path d="M1.5 1.5 L6.3 6.3 L11 1.5" fill="none" stroke="#e8e8e8" stroke-width="1.3"/></svg>
<div class="b" style="left:119px;top:194px;width:2px;height:2px;background:#e0e0e0;border-radius:1px;"></div>
<div class="b" style="left:119px;top:198.5px;width:2px;height:2px;background:#e0e0e0;border-radius:1px;"></div>
<div class="b" style="left:119px;top:203px;width:2px;height:2px;background:#e0e0e0;border-radius:1px;"></div>
<div class="b" style="left:130px;top:186px;width:74px;height:26px;border:1px solid #625d58;border-radius:4px;background:#2b2b2b;"></div>
<svg class="b" style="left:136px;top:193px;" width="14" height="13" viewBox="0 0 14 13"><path d="M1 1 L12.5 12 M12.5 1 L1 12" stroke="#7a7a7a" stroke-width="1.2"/></svg>
<svg class="b" style="left:158px;top:193px;" width="18" height="13" viewBox="0 0 18 13"><path d="M1 7 L6 12 L16.5 1" fill="none" stroke="#7a7a7a" stroke-width="1.2"/></svg>
<span class="t" style="left:184.20px;top:190px;font-size:16px;color:#f0f0f0;font-style:italic;font-family:'Liberation Serif',serif;transform:scaleX(1.2197);">fx</span>
<div class="b" style="left:208px;top:186px;width:1704px;height:66px;border:1px solid #625d58;border-radius:5px;background:#2b2b2b;"></div>
<span class="t" style="left:220.50px;top:190px;font-size:13.2px;color:#fff;transform:scaleX(1.0141);">30/04/2025</span>
<svg class="b" style="left:1896px;top:193px;" width="12" height="8" viewBox="0 0 12 8"><path d="M1.2 6.5 L6 1.7 L10.8 6.5" fill="none" stroke="#d0d0d0" stroke-width="1.3"/></svg>
<div class="b" style="left:0px;top:259px;width:1920px;height:719px;background:#0c0c0c;"></div>
<div class="b" style="left:0;top:255px;width:1920px;height:4px;background:linear-gradient(rgba(12,12,12,0),rgba(12,12,12,1));"></div>
<div class="b" style="left:26px;top:279px;width:1872px;height:699px;background:#fff;"></div>
<div class="b" style="left:120px;top:279px;width:1px;height:699px;background:#e4e4e4;"></div>
<div class="b" style="left:204px;top:279px;width:1px;height:699px;background:#e4e4e4;"></div>
<div class="b" style="left:288px;top:279px;width:1px;height:699px;background:#e4e4e4;"></div>
<div class="b" style="left:372px;top:279px;width:1px;height:699px;background:#e4e4e4;"></div>
<div class="b" style="left:456px;top:279px;width:1px;height:699px;background:#e4e4e4;"></div>
<div class="b" style="left:540px;top:279px;width:1px;height:699px;background:#e4e4e4;"></div>
<div class="b" style="left:624px;top:279px;width:1px;height:699px;background:#e4e4e4;"></div>
<div class="b" style="left:708px;top:279px;width:1px;height:699px;background:#e4e4e4;"></div>
<div class="b" style="left:792px;top:279px;width:1px;height:699px;background:#e4e4e4;"></div>
<div class="b" style="left:876px;top:279px;width:1px;height:699px;background:#e4e4e4;"></div>
<div class="b" style="left:960px;top:279px;width:1px;height:699px;background:#e4e4e4;"></div>
<div class="b" style="left:1044px;top:279px;width:1px;height:699px;background:#e4e4e4;"></div>
<div class="b" style="left:1128px;top:279px;width:1px;height:699px;background:#e4e4e4;"></div>
<div class="b" style="left:1212px;top:279px;width:1px;height:699px;background:#e4e4e4;"></div>
<div class="b" style="left:1296px;top:279px;width:1px;height:699px;background:#e4e4e4;"></div>
<div class="b" style="left:1380px;top:279px;width:1px;height:699px;background:#e4e4e4;"></div>
<div class="b" style="left:1464px;top:279px;width:1px;height:699px;background:#e4e4e4;"></div>
<div class="b" style="left:1548px;top:279px;width:1px;height:699px;background:#e4e4e4;"></div>
<div class="b" style="left:1725px;top:279px;width:1px;height:699px;background:#e4e4e4;"></div>
<div class="b" style="left:1880px;top:279px;width:1px;height:699px;background:#e4e4e4;"></div>
<div class="b" style="left:26px;top:298px;width:1872px;height:1px;background:#e4e4e4;"></div>
<div class="b" style="left:26px;top:318px;width:1872px;height:1px;background:#e4e4e4;"></div>
<div class="b" style="left:26px;top:381px;width:1872px;height:1px;background:#e4e4e4;"></div>
<div class="b" style="left:26px;top:401px;width:1872px;height:1px;background:#e4e4e4;"></div>
<div class="b" style="left:26px;top:421px;width:1872px;height:1px;background:#e4e4e4;"></div>
<div class="b" style="left:26px;top:441px;width:1872px;height:1px;background:#e4e4e4;"></div>
<div class="b" style="left:26px;top:461px;width:1872px;height:1px;background:#e4e4e4;"></div>
<div class="b" style="left:26px;top:481px;width:1872px;height:1px;background:#e4e4e4;"></div>
<div class="b" style="left:26px;top:501px;width:1872px;height:1px;background:#e4e4e4;"></div>
<div class="b" style="left:26px;top:521px;width:1872px;height:1px;background:#e4e4e4;"></div>
<div class="b" style="left:26px;top:541px;width:1872px;height:1px;background:#e4e4e4;"></div>
<div class="b" style="left:26px;top:561px;width:1872px;height:1px;background:#e4e4e4;"></div>
<div class="b" style="left:26px;top:581px;width:1872px;height:1px;background:#e4e4e4;"></div>
<div class="b" style="left:26px;top:601px;width:1872px;height:1px;background:#e4e4e4;"></div>
<div class="b" style="left:26px;top:621px;width:1872px;height:1px;background:#e4e4e4;"></div>
<div class="b" style="left:26px;top:641px;width:1872px;height:1px;background:#e4e4e4;"></div>
<div class="b" style="left:26px;top:661px;width:1872px;height:1px;background:#e4e4e4;"></div>
<div class="b" style="left:26px;top:681px;width:1872px;height:1px;background:#e4e4e4;"></div>
<div class="b" style="left:26px;top:701px;width:1872px;height:1px;background:#e4e4e4;"></div>
<div class="b" style="left:26px;top:721px;width:1872px;height:1px;background:#e4e4e4;"></div>
<div class="b" style="left:26px;top:741px;width:1872px;height:1px;background:#e4e4e4;"></div>
<div class="b" style="left:26px;top:761px;width:1872px;height:1px;background:#e4e4e4;"></div>
<div class="b" style="left:26px;top:781px;width:1872px;height:1px;background:#e4e4e4;"></div>
<div class="b" style="left:26px;top:801px;width:1872px;height:1px;background:#e4e4e4;"></div>
<div class="b" style="left:26px;top:821px;width:1872px;height:1px;background:#e4e4e4;"></div>
<div class="b" style="left:26px;top:841px;width:1872px;height:1px;background:#e4e4e4;"></div>
<div class="b" style="left:26px;top:861px;width:1872px;height:1px;background:#e4e4e4;"></div>
<div class="b" style="left:26px;top:881px;width:1872px;height:1px;background:#e4e4e4;"></div>
<div class="b" style="left:26px;top:901px;width:1872px;height:1px;background:#e4e4e4;"></div>
<div class="b" style="left:26px;top:921px;width:1872px;height:1px;background:#e4e4e4;"></div>
<div class="b" style="left:26px;top:941px;width:1872px;height:1px;background:#e4e4e4;"></div>
<div class="b" style="left:26px;top:961px;width:1872px;height:1px;background:#e4e4e4;"></div>
<span class="t" style="left:71.25px;top:260px;font-size:12.6px;color:#e8e8e8;">I</span>
<div class="b" style="left:120px;top:258px;width:1px;height:20px;background:linear-gradient(#161616,#7a7a7a);"></div>
<span class="t" style="left:159.35px;top:260px;font-size:12.6px;color:#e8e8e8;">J</span>
<div class="b" style="left:204px;top:258px;width:1px;height:20px;background:linear-gradient(#161616,#7a7a7a);"></div>
<span class="t" style="left:242.29px;top:260px;font-size:12.6px;color:#e8e8e8;">K</span>
<div class="b" style="left:288px;top:258px;width:1px;height:20px;background:linear-gradient(#161616,#7a7a7a);"></div>
<span class="t" style="left:327.00px;top:260px;font-size:12.6px;color:#e8e8e8;">L</span>
<div class="b" style="left:372px;top:258px;width:1px;height:20px;background:linear-gradient(#161616,#7a7a7a);"></div>
<span class="t" style="left:409.26px;top:260px;font-size:12.6px;color:#e8e8e8;">M</span>
<div class="b" style="left:456px;top:258px;width:1px;height:20px;background:linear-gradient(#161616,#7a7a7a);"></div>
<span class="t" style="left:493.95px;top:260px;font-size:12.6px;color:#e8e8e8;">N</span>
<div class="b" style="left:540px;top:258px;width:1px;height:20px;background:linear-gradient(#161616,#7a7a7a);"></div>
<span class="t" style="left:577.60px;top:260px;font-size:12.6px;color:#e8e8e8;">O</span>
<div class="b" style="left:624px;top:258px;width:1px;height:20px;background:linear-gradient(#161616,#7a7a7a);"></div>
<span class="t" style="left:662.29px;top:260px;font-size:12.6px;color:#e8e8e8;">P</span>
<div class="b" style="left:708px;top:258px;width:1px;height:20px;background:linear-gradient(#161616,#7a7a7a);"></div>
<span class="t" style="left:745.60px;top:260px;font-size:12.6px;color:#e8e8e8;">Q</span>
<div class="b" style="left:792px;top:258px;width:1px;height:20px;background:linear-gradient(#161616,#7a7a7a);"></div>
<span class="t" style="left:829.95px;top:260px;font-size:12.6px;color:#e8e8e8;">R</span>
<div class="b" style="left:876px;top:258px;width:1px;height:20px;background:linear-gradient(#161616,#7a7a7a);"></div>
<span class="t" style="left:914.29px;top:260px;font-size:12.6px;color:#e8e8e8;">S</span>
<div class="b" style="left:960px;top:258px;width:1px;height:20px;background:linear-gradient(#161616,#7a7a7a);"></div>
<span class="t" style="left:998.66px;top:260px;font-size:12.6px;color:#e8e8e8;">T</span>
<div class="b" style="left:1044px;top:258px;width:1px;height:20px;background:linear-gradient(#161616,#7a7a7a);"></div>
<span class="t" style="left:1081.95px;top:260px;font-size:12.6px;color:#e8e8e8;">U</span>
<div class="b" style="left:1128px;top:258px;width:1px;height:20px;background:linear-gradient(#161616,#7a7a7a);"></div>
<span class="t" style="left:1166.29px;top:260px;font-size:12.6px;color:#e8e8e8;">V</span>
<div class="b" style="left:1212px;top:258px;width:1px;height:20px;background:linear-gradient(#161616,#7a7a7a);"></div>
<span class="t" style="left:1248.55px;top:260px;font-size:12.6px;color:#e8e8e8;">W</span>
<div class="b" style="left:1296px;top:258px;width:1px;height:20px;background:linear-gradient(#161616,#7a7a7a);"></div>
<span class="t" style="left:1334.29px;top:260px;font-size:12.6px;color:#e8e8e8;">X</span>
<div class="b" style="left:1380px;top:258px;width:1px;height:20px;background:linear-gradient(#161616,#7a7a7a);"></div>
<span class="t" style="left:1418.29px;top:260px;font-size:12.6px;color:#e8e8e8;">Y</span>
<div class="b" style="left:1464px;top:258px;width:1px;height:20px;background:linear-gradient(#161616,#7a7a7a);"></div>
<span class="t" style="left:1502.66px;top:260px;font-size:12.6px;color:#e8e8e8;">Z</span>
<div class="b" style="left:1548px;top:258px;width:1px;height:20px;background:linear-gradient(#161616,#7a7a7a);"></div>
<span class="t" style="left:1628.59px;top:260px;font-size:12.6px;color:#e8e8e8;">AA</span>
<div class="b" style="left:1725px;top:259px;width:155px;height:20px;background:#6a6a6a;"></div>
<div class="b" style="left:1725px;top:276px;width:155px;height:3px;background:#2f7a55;"></div>
<div class="b" style="left:1725px;top:259px;width:1px;height:16px;background:#9a9a9a;"></div>
<div class="b" style="left:1880px;top:259px;width:1px;height:16px;background:#9a9a9a;"></div>
<span class="t" style="left:1794.59px;top:260px;font-size:12.6px;color:#fff;">AB</span>
<div class="b" style="left:25px;top:260px;width:1px;height:19px;background:#8f8f8f;"></div>
<div class="b" style="left:25px;top:382px;width:1px;height:19px;background:#2f6e50;"></div>
<div class="b" style="left:0px;top:278px;width:26px;height:1px;background:#8c8c8c;"></div>
<svg class="b" style="left:8px;top:262px;" width="18" height="16" viewBox="0 0 18 16"><path d="M3.5 13.5 L13.5 3.5 L13.5 13.5 Z" fill="#86868c"/></svg>
<div class="b" style="left:0px;top:298px;width:26px;height:1px;background:#8c8c8c;"></div>
<span class="t" style="left:9.10px;top:280px;font-size:12.6px;color:#e8e8e8;">1</span>
<div class="b" style="left:0px;top:318px;width:26px;height:1px;background:#8c8c8c;"></div>
<span class="t" style="left:9.10px;top:300px;font-size:12.6px;color:#e8e8e8;">2</span>
<div class="b" style="left:0px;top:381px;width:26px;height:1px;background:#8c8c8c;"></div>
<span class="t" style="left:9.10px;top:363px;font-size:12.6px;color:#e8e8e8;">3</span>
<div class="b" style="left:0px;top:382px;width:25px;height:19px;background:#6a6a6a;"></div>
<div class="b" style="left:0px;top:401px;width:26px;height:1px;background:#8c8c8c;"></div>
<span class="t" style="left:9.10px;top:383px;font-size:12.6px;color:#fff;">4</span>
<div class="b" style="left:0px;top:421px;width:26px;height:1px;background:#8c8c8c;"></div>
<span class="t" style="left:9.10px;top:403px;font-size:12.6px;color:#e8e8e8;">5</span>
<div class="b" style="left:0px;top:441px;width:26px;height:1px;background:#8c8c8c;"></div>
<span class="t" style="left:9.10px;top:423px;font-size:12.6px;color:#e8e8e8;">6</span>
<div class="b" style="left:0px;top:461px;width:26px;height:1px;background:#8c8c8c;"></div>
<span class="t" style="left:9.10px;top:443px;font-size:12.6px;color:#e8e8e8;">7</span>
<div class="b" style="left:0px;top:481px;width:26px;height:1px;background:#8c8c8c;"></div>
<span class="t" style="left:9.10px;top:463px;font-size:12.6px;color:#e8e8e8;">8</span>
<div class="b" style="left:0px;top:501px;width:26px;height:1px;background:#8c8c8c;"></div>
<span class="t" style="left:9.10px;top:483px;font-size:12.6px;color:#e8e8e8;">9</span>
<div class="b" style="left:0px;top:521px;width:26px;height:1px;background:#8c8c8c;"></div>
<span class="t" style="left:6.55px;top:503px;font-size:12.6px;color:#e8e8e8;transform:scaleX(0.9203);">10</span>
<div class="b" style="left:0px;top:541px;width:26px;height:1px;background:#8c8c8c;"></div>
<span class="t" style="left:6.55px;top:523px;font-size:12.6px;color:#e8e8e8;transform:scaleX(0.9868);">11</span>
<div class="b" style="left:0px;top:561px;width:26px;height:1px;background:#8c8c8c;"></div>
<span class="t" style="left:6.55px;top:543px;font-size:12.6px;color:#e8e8e8;transform:scaleX(0.9203);">12</span>
<div class="b" style="left:0px;top:581px;width:26px;height:1px;background:#8c8c8c;"></div>
<span class="t" style="left:6.55px;top:563px;font-size:12.6px;color:#e8e8e8;transform:scaleX(0.9203);">13</span>
<div class="b" style="left:0px;top:601px;width:26px;height:1px;background:#8c8c8c;"></div>
<span class="t" style="left:6.55px;top:583px;font-size:12.6px;color:#e8e8e8;transform:scaleX(0.9203);">14</span>
<div class="b" style="left:0px;top:621px;width:26px;height:1px;background:#8c8c8c;"></div>
<span class="t" style="left:6.55px;top:603px;font-size:12.6px;color:#e8e8e8;transform:scaleX(0.9203);">15</span>
<div class="b" style="left:0px;top:641px;width:26px;height:1px;background:#8c8c8c;"></div>
<span class="t" style="left:6.55px;top:623px;font-size:12.6px;color:#e8e8e8;transform:scaleX(0.9203);">16</span>
<div class="b" style="left:0px;top:661px;width:26px;height:1px;background:#8c8c8c;"></div>
<span class="t" style="left:6.55px;top:643px;font-size:12.6px;color:#e8e8e8;transform:scaleX(0.9203);">17</span>
<div class="b" style="left:0px;top:681px;width:26px;height:1px;background:#8c8c8c;"></div>
<span class="t" style="left:6.55px;top:663px;font-size:12.6px;color:#e8e8e8;transform:scaleX(0.9203);">18</span>
<div class="b" style="left:0px;top:701px;width:26px;height:1px;background:#8c8c8c;"></div>
<span class="t" style="left:6.55px;top:683px;font-size:12.6px;color:#e8e8e8;transform:scaleX(0.9203);">19</span>
<div class="b" style="left:0px;top:721px;width:26px;height:1px;background:#8c8c8c;"></div>
<span class="t" style="left:6.55px;top:703px;font-size:12.6px;color:#e8e8e8;transform:scaleX(0.9203);">20</span>
<div class="b" style="left:0px;top:741px;width:26px;height:1px;background:#8c8c8c;"></div>
<span class="t" style="left:6.55px;top:723px;font-size:12.6px;color:#e8e8e8;transform:scaleX(0.9203);">21</span>
<div class="b" style="left:0px;top:761px;width:26px;height:1px;background:#8c8c8c;"></div>
<span class="t" style="left:6.55px;top:743px;font-size:12.6px;color:#e8e8e8;transform:scaleX(0.9203);">22</span>
<div class="b" style="left:0px;top:781px;width:26px;height:1px;background:#8c8c8c;"></div>
<span class="t" style="left:6.55px;top:763px;font-size:12.6px;color:#e8e8e8;transform:scaleX(0.9203);">23</span>
<div class="b" style="left:0px;top:801px;width:26px;height:1px;background:#8c8c8c;"></div>
<span class="t" style="left:6.55px;top:783px;font-size:12.6px;color:#e8e8e8;transform:scaleX(0.9203);">24</span>
<div class="b" style="left:0px;top:821px;width:26px;height:1px;background:#8c8c8c;"></div>
<span class="t" style="left:6.55px;top:803px;font-size:12.6px;color:#e8e8e8;transform:scaleX(0.9203);">25</span>
<div class="b" style="left:0px;top:841px;width:26px;height:1px;background:#8c8c8c;"></div>
<span class="t" style="left:6.55px;top:823px;font-size:12.6px;color:#e8e8e8;transform:scaleX(0.9203);">26</span>
<div class="b" style="left:0px;top:861px;width:26px;height:1px;background:#8c8c8c;"></div>
<span class="t" style="left:6.55px;top:843px;font-size:12.6px;color:#e8e8e8;transform:scaleX(0.9203);">27</span>
<div class="b" style="left:0px;top:881px;width:26px;height:1px;background:#8c8c8c;"></div>
<span class="t" style="left:6.55px;top:863px;font-size:12.6px;color:#e8e8e8;transform:scaleX(0.9203);">28</span>
<div class="b" style="left:0px;top:901px;width:26px;height:1px;background:#8c8c8c;"></div>
<span class="t" style="left:6.55px;top:883px;font-size:12.6px;color:#e8e8e8;transform:scaleX(0.9203);">29</span>
<div class="b" style="left:0px;top:921px;width:26px;height:1px;background:#8c8c8c;"></div>
<span class="t" style="left:6.55px;top:903px;font-size:12.6px;color:#e8e8e8;transform:scaleX(0.9203);">30</span>
<div class="b" style="left:0px;top:941px;width:26px;height:1px;background:#8c8c8c;"></div>
<span class="t" style="left:6.55px;top:923px;font-size:12.6px;color:#e8e8e8;transform:scaleX(0.9203);">31</span>
<div class="b" style="left:0px;top:961px;width:26px;height:1px;background:#8c8c8c;"></div>
<span class="t" style="left:6.55px;top:943px;font-size:12.6px;color:#e8e8e8;transform:scaleX(0.9203);">32</span>
<span class="t" style="left:6.55px;top:963px;font-size:12.6px;color:#e8e8e8;transform:scaleX(0.9203);">33</span>
<div class="b" style="left:26px;top:319px;width:1854px;height:62px;background:#4472c4;"></div>
<div class="b" style="left:26px;top:382px;width:1854px;height:20px;background:#d9e1f2;"></div>
<div class="b" style="left:26px;top:401px;width:1854px;height:1px;background:#a3b8e0;"></div>
<div class="b" style="left:26px;top:421px;width:1854px;height:1px;background:#a3b8e0;"></div>
<div class="b" style="left:26px;top:422px;width:1854px;height:20px;background:#d9e1f2;"></div>
<div class="b" style="left:26px;top:441px;width:1854px;height:1px;background:#a3b8e0;"></div>
<div class="b" style="left:26px;top:461px;width:1854px;height:1px;background:#a3b8e0;"></div>
<div class="b" style="left:26px;top:462px;width:1854px;height:20px;background:#d9e1f2;"></div>
<div class="b" style="left:26px;top:481px;width:1854px;height:1px;background:#a3b8e0;"></div>
<div class="b" style="left:26px;top:501px;width:1854px;height:1px;background:#a3b8e0;"></div>
<div class="b" style="left:26px;top:502px;width:1854px;height:20px;background:#d9e1f2;"></div>
<div class="b" style="left:26px;top:521px;width:1854px;height:1px;background:#a3b8e0;"></div>
<div class="b" style="left:26px;top:541px;width:1854px;height:1px;background:#a3b8e0;"></div>
<div class="b" style="left:26px;top:542px;width:1854px;height:20px;background:#d9e1f2;"></div>
<div class="b" style="left:26px;top:561px;width:1854px;height:1px;background:#a3b8e0;"></div>
<div class="b" style="left:26px;top:581px;width:1854px;height:1px;background:#a3b8e0;"></div>
<div class="b" style="left:26px;top:582px;width:1854px;height:20px;background:#d9e1f2;"></div>
<div class="b" style="left:26px;top:601px;width:1854px;height:1px;background:#a3b8e0;"></div>
<div class="b" style="left:26px;top:381px;width:1854px;height:1px;background:#a3b8e0;"></div>
<div class="b" style="left:120px;top:402px;width:1px;height:19px;background:#e4e4e4;"></div>
<div class="b" style="left:204px;top:402px;width:1px;height:19px;background:#e4e4e4;"></div>
<div class="b" style="left:288px;top:402px;width:1px;height:19px;background:#e4e4e4;"></div>
<div class="b" style="left:372px;top:402px;width:1px;height:19px;background:#e4e4e4;"></div>
<div class="b" style="left:456px;top:402px;width:1px;height:19px;background:#e4e4e4;"></div>
<div class="b" style="left:540px;top:402px;width:1px;height:19px;background:#e4e4e4;"></div>
<div class="b" style="left:624px;top:402px;width:1px;height:19px;background:#e4e4e4;"></div>
<div class="b" style="left:708px;top:402px;width:1px;height:19px;background:#e4e4e4;"></div>
<div class="b" style="left:792px;top:402px;width:1px;height:19px;background:#e4e4e4;"></div>
<div class="b" style="left:876px;top:402px;width:1px;height:19px;background:#e4e4e4;"></div>
<div class="b" style="left:960px;top:402px;width:1px;height:19px;background:#e4e4e4;"></div>
<div class="b" style="left:1044px;top:402px;width:1px;height:19px;background:#e4e4e4;"></div>
<div class="b" style="left:1128px;top:402px;width:1px;height:19px;background:#e4e4e4;"></div>
<div class="b" style="left:1212px;top:402px;width:1px;height:19px;background:#e4e4e4;"></div>
<div class="b" style="left:1296px;top:402px;width:1px;height:19px;background:#e4e4e4;"></div>
<div class="b" style="left:1380px;top:402px;width:1px;height:19px;background:#e4e4e4;"></div>
<div class="b" style="left:1464px;top:402px;width:1px;height:19px;background:#e4e4e4;"></div>
<div class="b" style="left:1548px;top:402px;width:1px;height:19px;background:#e4e4e4;"></div>
<div class="b" style="left:1725px;top:402px;width:1px;height:19px;background:#e4e4e4;"></div>
<div class="b" style="left:120px;top:442px;width:1px;height:19px;background:#e4e4e4;"></div>
<div class="b" style="left:204px;top:442px;width:1px;height:19px;background:#e4e4e4;"></div>
<div class="b" style="left:288px;top:442px;width:1px;height:19px;background:#e4e4e4;"></div>
<div class="b" style="left:372px;top:442px;width:1px;height:19px;background:#e4e4e4;"></div>
<div class="b" style="left:456px;top:442px;width:1px;height:19px;background:#e4e4e4;"></div>
<div class="b" style="left:540px;top:442px;width:1px;height:19px;background:#e4e4e4;"></div>
<div class="b" style="left:624px;top:442px;width:1px;height:19px;background:#e4e4e4;"></div>
<div class="b" style="left:708px;top:442px;width:1px;height:19px;background:#e4e4e4;"></div>
<div class="b" style="left:792px;top:442px;width:1px;height:19px;background:#e4e4e4;"></div>
<div class="b" style="left:876px;top:442px;width:1px;height:19px;background:#e4e4e4;"></div>
<div class="b" style="left:960px;top:442px;width:1px;height:19px;background:#e4e4e4;"></div>
<div class="b" style="left:1044px;top:442px;width:1px;height:19px;background:#e4e4e4;"></div>
<div class="b" style="left:1128px;top:442px;width:1px;height:19px;background:#e4e4e4;"></div>
<div class="b" style="left:1212px;top:442px;width:1px;height:19px;background:#e4e4e4;"></div>
<div class="b" style="left:1296px;top:442px;width:1px;height:19px;background:#e4e4e4;"></div>
<div class="b" style="left:1380px;top:442px;width:1px;height:19px;background:#e4e4e4;"></div>
<div class="b" style="left:1464px;top:442px;width:1px;height:19px;background:#e4e4e4;"></div>
<div class="b" style="left:1548px;top:442px;width:1px;height:19px;background:#e4e4e4;"></div>
<div class="b" style="left:1725px;top:442px;width:1px;height:19px;background:#e4e4e4;"></div>
<div class="b" style="left:120px;top:482px;width:1px;height:19px;background:#e4e4e4;"></div>
<div class="b" style="left:204px;top:482px;width:1px;height:19px;background:#e4e4e4;"></div>
<div class="b" style="left:288px;top:482px;width:1px;height:19px;background:#e4e4e4;"></div>
<div class="b" style="left:372px;top:482px;width:1px;height:19px;background:#e4e4e4;"></div>
<div class="b" style="left:456px;top:482px;width:1px;height:19px;background:#e4e4e4;"></div>
<div class="b" style="left:540px;top:482px;width:1px;height:19px;background:#e4e4e4;"></div>
<div class="b" style="left:624px;top:482px;width:1px;height:19px;background:#e4e4e4;"></div>
<div class="b" style="left:708px;top:482px;width:1px;height:19px;background:#e4e4e4;"></div>
<div class="b" style="left:792px;top:482px;width:1px;height:19px;background:#e4e4e4;"></div>
<div class="b" style="left:876px;top:482px;width:1px;height:19px;background:#e4e4e4;"></div>
<div class="b" style="left:960px;top:482px;width:1px;height:19px;background:#e4e4e4;"></div>
<div class="b" style="left:1044px;top:482px;width:1px;height:19px;background:#e4e4e4;"></div>
<div class="b" style="left:1128px;top:482px;width:1px;height:19px;background:#e4e4e4;"></div>
<div class="b" style="left:1212px;top:482px;width:1px;height:19px;background:#e4e4e4;"></div>
<div class="b" style="left:1296px;top:482px;width:1px;height:19px;background:#e4e4e4;"></div>
<div class="b" style="left:1380px;top:482px;width:1px;height:19px;background:#e4e4e4;"></div>
<div class="b" style="left:1464px;top:482px;width:1px;height:19px;background:#e4e4e4;"></div>
<div class="b" style="left:1548px;top:482px;width:1px;height:19px;background:#e4e4e4;"></div>
<div class="b" style="left:1725px;top:482px;width:1px;height:19px;background:#e4e4e4;"></div>
<div class="b" style="left:120px;top:522px;width:1px;height:19px;background:#e4e4e4;"></div>
<div class="b" style="left:204px;top:522px;width:1px;height:19px;background:#e4e4e4;"></div>
<div class="b" style="left:288px;top:522px;width:1px;height:19px;background:#e4e4e4;"></div>
<div class="b" style="left:372px;top:522px;width:1px;height:19px;background:#e4e4e4;"></div>
<div class="b" style="left:456px;top:522px;width:1px;height:19px;background:#e4e4e4;"></div>
<div class="b" style="left:540px;top:522px;width:1px;height:19px;background:#e4e4e4;"></div>
<div class="b" style="left:624px;top:522px;width:1px;height:19px;background:#e4e4e4;"></div>
<div class="b" style="left:708px;top:522px;width:1px;height:19px;background:#e4e4e4;"></div>
<div class="b" style="left:792px;top:522px;width:1px;height:19px;background:#e4e4e4;"></div>
<div class="b" style="left:876px;top:522px;width:1px;height:19px;background:#e4e4e4;"></div>
<div class="b" style="left:960px;top:522px;width:1px;height:19px;background:#e4e4e4;"></div>
<div class="b" style="left:1044px;top:522px;width:1px;height:19px;background:#e4e4e4;"></div>
<div class="b" style="left:1128px;top:522px;width:1px;height:19px;background:#e4e4e4;"></div>
<div class="b" style="left:1212px;top:522px;width:1px;height:19px;background:#e4e4e4;"></div>
<div class="b" style="left:1296px;top:522px;width:1px;height:19px;background:#e4e4e4;"></div>
<div class="b" style="left:1380px;top:522px;width:1px;height:19px;background:#e4e4e4;"></div>
<div class="b" style="left:1464px;top:522px;width:1px;height:19px;background:#e4e4e4;"></div>
<div class="b" style="left:1548px;top:522px;width:1px;height:19px;background:#e4e4e4;"></div>
<div class="b" style="left:1725px;top:522px;width:1px;height:19px;background:#e4e4e4;"></div>
<div class="b" style="left:120px;top:562px;width:1px;height:19px;background:#e4e4e4;"></div>
<div class="b" style="left:204px;top:562px;width:1px;height:19px;background:#e4e4e4;"></div>
<div class="b" style="left:288px;top:562px;width:1px;height:19px;background:#e4e4e4;"></div>
<div class="b" style="left:372px;top:562px;width:1px;height:19px;background:#e4e4e4;"></div>
<div class="b" style="left:456px;top:562px;width:1px;height:19px;background:#e4e4e4;"></div>
<div class="b" style="left:540px;top:562px;width:1px;height:19px;background:#e4e4e4;"></div>
<div class="b" style="left:624px;top:562px;width:1px;height:19px;background:#e4e4e4;"></div>
<div class="b" style="left:708px;top:562px;width:1px;height:19px;background:#e4e4e4;"></div>
<div class="b" style="left:792px;top:562px;width:1px;height:19px;background:#e4e4e4;"></div>
<div class="b" style="left:876px;top:562px;width:1px;height:19px;background:#e4e4e4;"></div>
<div class="b" style="left:960px;top:562px;width:1px;height:19px;background:#e4e4e4;"></div>
<div class="b" style="left:1044px;top:562px;width:1px;height:19px;background:#e4e4e4;"></div>
<div class="b" style="left:1128px;top:562px;width:1px;height:19px;background:#e4e4e4;"></div>
<div class="b" style="left:1212px;top:562px;width:1px;height:19px;background:#e4e4e4;"></div>
<div class="b" style="left:1296px;top:562px;width:1px;height:19px;background:#e4e4e4;"></div>
<div class="b" style="left:1380px;top:562px;width:1px;height:19px;background:#e4e4e4;"></div>
<div class="b" style="left:1464px;top:562px;width:1px;height:19px;background:#e4e4e4;"></div>
<div class="b" style="left:1548px;top:562px;width:1px;height:19px;background:#e4e4e4;"></div>
<div class="b" style="left:1725px;top:562px;width:1px;height:19px;background:#e4e4e4;"></div>
<div class="b" style="left:457px;top:382px;width:83px;height:219px;background:#fff2cc;"></div>
<div class="b" style="left:456px;top:381px;width:1px;height:221px;background:#000;"></div>
<div class="b" style="left:540px;top:381px;width:1px;height:221px;background:#000;"></div>
<div class="b" style="left:456px;top:601px;width:85px;height:1px;background:#000;"></div>
<div class="b" style="left:457px;top:401px;width:83px;height:1px;background:#e6ddbe;"></div>
<div class="b" style="left:457px;top:421px;width:83px;height:1px;background:#e6ddbe;"></div>
<div class="b" style="left:457px;top:441px;width:83px;height:1px;background:#e6ddbe;"></div>
<div class="b" style="left:457px;top:461px;width:83px;height:1px;background:#e6ddbe;"></div>
<div class="b" style="left:457px;top:481px;width:83px;height:1px;background:#e6ddbe;"></div>
<div class="b" style="left:457px;top:501px;width:83px;height:1px;background:#e6ddbe;"></div>
<div class="b" style="left:457px;top:521px;width:83px;height:1px;background:#e6ddbe;"></div>
<div class="b" style="left:457px;top:541px;width:83px;height:1px;background:#e6ddbe;"></div>
<div class="b" style="left:457px;top:561px;width:83px;height:1px;background:#e6ddbe;"></div>
<div class="b" style="left:457px;top:581px;width:83px;height:1px;background:#e6ddbe;"></div>
<div class="b" style="left:26px;top:319px;width:94px;height:62px;overflow:hidden;">
<span class="t" style="left:1.30px;top:22px;font-size:12.6px;color:#fff;font-weight:bold;transform:scaleX(0.9643);">Status PTKP</span>
</div>
<div class="b" style="left:104px;top:364px;width:16px;height:16px;background:linear-gradient(#ffffff,#f1f1f1);border:1px solid #d3d8e2;"></div>
<svg class="b" style="left:107px;top:370px;" width="10" height="5" viewBox="0 0 10 5"><path d="M1 0 L9 0 L5 4.2 Z" fill="#5c5c54"/></svg>
<div class="b" style="left:121px;top:319px;width:83px;height:62px;overflow:hidden;">
<span class="t" style="left:1.95px;top:22px;font-size:12.6px;color:#fff;font-weight:bold;transform:scaleX(0.9702);">Posisi</span>
</div>
<div class="b" style="left:188px;top:364px;width:16px;height:16px;background:linear-gradient(#ffffff,#f1f1f1);border:1px solid #d3d8e2;"></div>
<svg class="b" style="left:191px;top:370px;" width="10" height="5" viewBox="0 0 10 5"><path d="M1 0 L9 0 L5 4.2 Z" fill="#5c5c54"/></svg>
<div class="b" style="left:205px;top:319px;width:83px;height:62px;overflow:hidden;">
<span class="t" style="left:1.70px;top:12px;font-size:12.6px;color:#fff;font-weight:bold;transform:scaleX(1.0318);">Kode Objek</span>
<span class="t" style="left:1.70px;top:32px;font-size:12.6px;color:#fff;font-weight:bold;transform:scaleX(1.0167);">Pajak</span>
</div>
<div class="b" style="left:272px;top:364px;width:16px;height:16px;background:linear-gradient(#ffffff,#f1f1f1);border:1px solid #d3d8e2;"></div>
<svg class="b" style="left:275px;top:370px;" width="10" height="5" viewBox="0 0 10 5"><path d="M1 0 L9 0 L5 4.2 Z" fill="#5c5c54"/></svg>
<div class="b" style="left:289px;top:319px;width:83px;height:62px;overflow:hidden;">
<span class="t" style="left:1.45px;top:12px;font-size:12.6px;color:#fff;font-weight:bold;">Status Bukti</span>
<span class="t" style="left:1.45px;top:32px;font-size:12.6px;color:#fff;font-weight:bold;transform:scaleX(1.0317);">Potong</span>
</div>
<div class="b" style="left:356px;top:364px;width:16px;height:16px;background:linear-gradient(#ffffff,#f1f1f1);border:1px solid #d3d8e2;"></div>
<svg class="b" style="left:359px;top:370px;" width="10" height="5" viewBox="0 0 10 5"><path d="M1 0 L9 0 L5 4.2 Z" fill="#5c5c54"/></svg>
<div class="b" style="left:373px;top:319px;width:83px;height:62px;overflow:hidden;">
<span class="t" style="left:1.20px;top:2px;font-size:12.6px;color:#fff;font-weight:bold;transform:scaleX(1.0147);">Jumlah</span>
<span class="t" style="left:1.80px;top:22px;font-size:12.6px;color:#fff;font-weight:bold;transform:scaleX(0.9944);">Bulan</span>
<span class="t" style="left:1.80px;top:42px;font-size:12.6px;color:#fff;font-weight:bold;transform:scaleX(1.0370);">Bekerja</span>
</div>
<div class="b" style="left:440px;top:364px;width:16px;height:16px;background:linear-gradient(#ffffff,#f1f1f1);border:1px solid #d3d8e2;"></div>
<svg class="b" style="left:443px;top:370px;" width="10" height="5" viewBox="0 0 10 5"><path d="M1 0 L9 0 L5 4.2 Z" fill="#5c5c54"/></svg>
<div class="b" style="left:457px;top:319px;width:83px;height:62px;overflow:hidden;">
<span class="t" style="left:1.95px;top:22px;font-size:12.6px;color:#fff;font-weight:bold;transform:scaleX(1.0498);">Gaji</span>
</div>
<div class="b" style="left:524px;top:364px;width:16px;height:16px;background:linear-gradient(#ffffff,#f1f1f1);border:1px solid #d3d8e2;"></div>
<svg class="b" style="left:527px;top:370px;" width="10" height="5" viewBox="0 0 10 5"><path d="M1 0 L9 0 L5 4.2 Z" fill="#5c5c54"/></svg>
<div class="b" style="left:541px;top:319px;width:83px;height:62px;overflow:hidden;">
<span class="t" style="left:1.70px;top:12px;font-size:12.6px;color:#fff;font-weight:bold;transform:scaleX(0.9755);">Opsi Gross</span>
<span class="t" style="left:1.70px;top:32px;font-size:12.6px;color:#fff;font-weight:bold;transform:scaleX(1.0781);">Up</span>
</div>
<div class="b" style="left:608px;top:364px;width:16px;height:16px;background:linear-gradient(#ffffff,#f1f1f1);border:1px solid #d3d8e2;"></div>
<svg class="b" style="left:611px;top:370px;" width="10" height="5" viewBox="0 0 10 5"><path d="M1 0 L9 0 L5 4.2 Z" fill="#5c5c54"/></svg>
<div class="b" style="left:625px;top:319px;width:83px;height:62px;overflow:hidden;">
<span class="t" style="left:1.70px;top:12px;font-size:12.6px;color:#fff;font-weight:bold;transform:scaleX(1.0215);">Tunjangan</span>
<span class="t" style="left:1.70px;top:32px;font-size:12.6px;color:#fff;font-weight:bold;transform:scaleX(0.9834);">PPh</span>
</div>
<div class="b" style="left:692px;top:364px;width:16px;height:16px;background:linear-gradient(#ffffff,#f1f1f1);border:1px solid #d3d8e2;"></div>
<svg class="b" style="left:695px;top:370px;" width="10" height="5" viewBox="0 0 10 5"><path d="M1 0 L9 0 L5 4.2 Z" fill="#5c5c54"/></svg>
<div class="b" style="left:709px;top:319px;width:83px;height:62px;overflow:hidden;">
<span class="t" style="left:1.70px;top:2px;font-size:12.6px;color:#fff;font-weight:bold;transform:scaleX(1.0239);">Tunjangan</span>
<span class="t" style="left:1.70px;top:22px;font-size:12.6px;color:#fff;font-weight:bold;transform:scaleX(1.0088);">Lainnya /</span>
<span class="t" style="left:1.70px;top:42px;font-size:12.6px;color:#fff;font-weight:bold;transform:scaleX(1.0279);">Lembur</span>
</div>
<div class="b" style="left:776px;top:364px;width:16px;height:16px;background:linear-gradient(#ffffff,#f1f1f1);border:1px solid #d3d8e2;"></div>
<svg class="b" style="left:779px;top:370px;" width="10" height="5" viewBox="0 0 10 5"><path d="M1 0 L9 0 L5 4.2 Z" fill="#5c5c54"/></svg>
<div class="b" style="left:793px;top:319px;width:83px;height:62px;overflow:hidden;">
<span class="t" style="left:1.80px;top:22px;font-size:12.6px;color:#fff;font-weight:bold;transform:scaleX(1.0384);">Honorarium</span>
</div>
<div class="b" style="left:860px;top:364px;width:16px;height:16px;background:linear-gradient(#ffffff,#f1f1f1);border:1px solid #d3d8e2;"></div>
<svg class="b" style="left:863px;top:370px;" width="10" height="5" viewBox="0 0 10 5"><path d="M1 0 L9 0 L5 4.2 Z" fill="#5c5c54"/></svg>
<div class="b" style="left:877px;top:319px;width:83px;height:62px;overflow:hidden;">
<span class="t" style="left:1.60px;top:22px;font-size:12.6px;color:#fff;font-weight:bold;transform:scaleX(0.9921);">Asuransi</span>
</div>
<div class="b" style="left:944px;top:364px;width:16px;height:16px;background:linear-gradient(#ffffff,#f1f1f1);border:1px solid #d3d8e2;"></div>
<svg class="b" style="left:947px;top:370px;" width="10" height="5" viewBox="0 0 10 5"><path d="M1 0 L9 0 L5 4.2 Z" fill="#5c5c54"/></svg>
<div class="b" style="left:961px;top:319px;width:83px;height:62px;overflow:hidden;">
<span class="t" style="left:1.70px;top:22px;font-size:12.6px;color:#fff;font-weight:bold;transform:scaleX(1.0624);">Natura</span>
</div>
<div class="b" style="left:1028px;top:364px;width:16px;height:16px;background:linear-gradient(#ffffff,#f1f1f1);border:1px solid #d3d8e2;"></div>
<svg class="b" style="left:1031px;top:370px;" width="10" height="5" viewBox="0 0 10 5"><path d="M1 0 L9 0 L5 4.2 Z" fill="#5c5c54"/></svg>
<div class="b" style="left:1045px;top:319px;width:83px;height:62px;overflow:hidden;">
<span class="t" style="left:1.70px;top:-8px;font-size:12.6px;color:#fff;font-weight:bold;transform:scaleX(1.0890);">Tantiem,</span>
<span class="t" style="left:1.70px;top:12px;font-size:12.6px;color:#fff;font-weight:bold;transform:scaleX(0.9891);">Bonus,</span>
<span class="t" style="left:1.70px;top:32px;font-size:12.6px;color:#fff;font-weight:bold;transform:scaleX(1.0285);">Gratifikasi,</span>
<span class="t" style="left:1.70px;top:52px;font-size:12.6px;color:#fff;font-weight:bold;transform:scaleX(0.8844);">THR</span>
</div>
<div class="b" style="left:1112px;top:364px;width:16px;height:16px;background:linear-gradient(#ffffff,#f1f1f1);border:1px solid #d3d8e2;"></div>
<svg class="b" style="left:1115px;top:370px;" width="10" height="5" viewBox="0 0 10 5"><path d="M1 0 L9 0 L5 4.2 Z" fill="#5c5c54"/></svg>
<div class="b" style="left:1129px;top:319px;width:83px;height:62px;overflow:hidden;">
<span class="t" style="left:1.70px;top:-8px;font-size:12.6px;color:#fff;font-weight:bold;transform:scaleX(1.0387);">Iuran</span>
<span class="t" style="left:1.70px;top:12px;font-size:12.6px;color:#fff;font-weight:bold;transform:scaleX(1.0222);">Pensiun</span>
<span class="t" style="left:1.70px;top:32px;font-size:12.6px;color:#fff;font-weight:bold;">atau Biaya</span>
<span class="t" style="left:1.70px;top:52px;font-size:12.6px;color:#fff;font-weight:bold;transform:scaleX(0.9800);">THT/JHT</span>
</div>
<div class="b" style="left:1196px;top:364px;width:16px;height:16px;background:linear-gradient(#ffffff,#f1f1f1);border:1px solid #d3d8e2;"></div>
<svg class="b" style="left:1199px;top:370px;" width="10" height="5" viewBox="0 0 10 5"><path d="M1 0 L9 0 L5 4.2 Z" fill="#5c5c54"/></svg>
<div class="b" style="left:1213px;top:319px;width:83px;height:62px;overflow:hidden;">
<span class="t" style="left:1.80px;top:22px;font-size:12.6px;color:#fff;font-weight:bold;transform:scaleX(1.0147);">Zakat</span>
</div>
<div class="b" style="left:1280px;top:364px;width:16px;height:16px;background:linear-gradient(#ffffff,#f1f1f1);border:1px solid #d3d8e2;"></div>
<svg class="b" style="left:1283px;top:370px;" width="10" height="5" viewBox="0 0 10 5"><path d="M1 0 L9 0 L5 4.2 Z" fill="#5c5c54"/></svg>
<div class="b" style="left:1297px;top:319px;width:83px;height:62px;overflow:hidden;">
<span class="t" style="left:1.60px;top:2px;font-size:12.6px;color:#fff;font-weight:bold;transform:scaleX(1.0298);">Nomor Bukti</span>
<span class="t" style="left:1.60px;top:22px;font-size:12.6px;color:#fff;font-weight:bold;transform:scaleX(1.0167);">Potong</span>
<span class="t" style="left:1.60px;top:42px;font-size:12.6px;color:#fff;font-weight:bold;transform:scaleX(0.9905);">Sebelumnya</span>
</div>
<div class="b" style="left:1364px;top:364px;width:16px;height:16px;background:linear-gradient(#ffffff,#f1f1f1);border:1px solid #d3d8e2;"></div>
<svg class="b" style="left:1367px;top:370px;" width="10" height="5" viewBox="0 0 10 5"><path d="M1 0 L9 0 L5 4.2 Z" fill="#5c5c54"/></svg>
<div class="b" style="left:1381px;top:319px;width:83px;height:62px;overflow:hidden;">
<span class="t" style="left:1.95px;top:12px;font-size:12.6px;color:#fff;font-weight:bold;transform:scaleX(0.9865);">Fasilitas</span>
<span class="t" style="left:1.95px;top:32px;font-size:12.6px;color:#fff;font-weight:bold;">Pajak</span>
</div>
<div class="b" style="left:1448px;top:364px;width:16px;height:16px;background:linear-gradient(#ffffff,#f1f1f1);border:1px solid #d3d8e2;"></div>
<svg class="b" style="left:1451px;top:370px;" width="10" height="5" viewBox="0 0 10 5"><path d="M1 0 L9 0 L5 4.2 Z" fill="#5c5c54"/></svg>
<div class="b" style="left:1465px;top:319px;width:83px;height:62px;overflow:hidden;">
<span class="t" style="left:1.70px;top:12px;font-size:12.6px;color:#fff;font-weight:bold;transform:scaleX(0.9701);">PPh Pasal</span>
<span class="t" style="left:1.70px;top:32px;font-size:12.6px;color:#fff;font-weight:bold;transform:scaleX(1.1093);">21*</span>
</div>
<div class="b" style="left:1532px;top:364px;width:16px;height:16px;background:linear-gradient(#ffffff,#f1f1f1);border:1px solid #d3d8e2;"></div>
<svg class="b" style="left:1535px;top:370px;" width="10" height="5" viewBox="0 0 10 5"><path d="M1 0 L9 0 L5 4.2 Z" fill="#5c5c54"/></svg>
<div class="b" style="left:1549px;top:319px;width:176px;height:62px;overflow:hidden;">
<span class="t" style="left:2.10px;top:22px;font-size:12.6px;color:#fff;font-weight:bold;transform:scaleX(1.0070);">ID TKU Pemotong</span>
</div>
<div class="b" style="left:1709px;top:364px;width:16px;height:16px;background:linear-gradient(#ffffff,#f1f1f1);border:1px solid #d3d8e2;"></div>
<svg class="b" style="left:1712px;top:370px;" width="10" height="5" viewBox="0 0 10 5"><path d="M1 0 L9 0 L5 4.2 Z" fill="#5c5c54"/></svg>
<div class="b" style="left:1726px;top:319px;width:154px;height:62px;overflow:hidden;">
<span class="t" style="left:1.95px;top:22px;font-size:12.6px;color:#fff;font-weight:bold;transform:scaleX(1.0164);">Tanggal Pemotongan</span>
</div>
<div class="b" style="left:1862px;top:364px;width:16px;height:16px;background:linear-gradient(#ffffff,#f1f1f1);border:1px solid #d3d8e2;"></div>
<svg class="b" style="left:1865px;top:370px;" width="10" height="5" viewBox="0 0 10 5"><path d="M1 0 L9 0 L5 4.2 Z" fill="#5c5c54"/></svg>
<span class="t" style="left:27.50px;top:382px;font-size:12.4px;color:#000;transform:scaleX(1.0422);">TK/0</span>
<span class="t" style="left:122.80px;top:383px;font-size:12.6px;color:#000;transform:scaleX(1.2063);">staff</span>
<span class="t" style="left:207.00px;top:383px;font-size:12.6px;color:#000;transform:scaleX(1.0286);">21-100-01</span>
<span class="t" style="left:291.40px;top:383px;font-size:12.6px;color:#000;transform:scaleX(1.0887);">PartialYear</span>
<span class="t" style="left:447.20px;top:383px;font-size:12.6px;color:#000;transform:scaleX(1.0153);">0</span>
<span class="t" style="left:471.00px;top:382px;font-size:13.6px;color:#000;transform:scaleX(0.9197);">13.318.000</span>
<span class="t" style="left:543.25px;top:383px;font-size:12.6px;color:#000;transform:scaleX(1.0872);">No</span>
<span class="t" style="left:699.20px;top:383px;font-size:12.6px;color:#000;transform:scaleX(1.0153);">0</span>
<span class="t" style="left:741.20px;top:383px;font-size:12.6px;color:#000;">2675000</span>
<span class="t" style="left:867.20px;top:383px;font-size:12.6px;color:#000;transform:scaleX(1.0153);">0</span>
<span class="t" style="left:891.60px;top:383px;font-size:12.6px;color:#000;transform:scaleX(1.0161);">711260,916</span>
<span class="t" style="left:1035.20px;top:383px;font-size:12.6px;color:#000;transform:scaleX(1.0153);">0</span>
<span class="t" style="left:1059.60px;top:383px;font-size:12.6px;color:#000;transform:scaleX(1.0161);">1159002,74</span>
<span class="t" style="left:1157.60px;top:383px;font-size:12.6px;color:#000;">469996,2</span>
<span class="t" style="left:1287.20px;top:383px;font-size:12.6px;color:#000;transform:scaleX(1.0153);">0</span>
<span class="t" style="left:1383.25px;top:383px;font-size:12.6px;color:#000;transform:scaleX(1.1780);">N/A</span>
<span class="t" style="left:1539.20px;top:383px;font-size:12.6px;color:#000;transform:scaleX(1.0153);">0</span>
<span class="t" style="left:1550.75px;top:383px;font-size:12.6px;color:#000;">0508615499077000000000</span>
<span class="t" style="left:1811.00px;top:383px;font-size:12.6px;color:#000;transform:scaleX(1.0303);">2025-04-30</span>
<svg class="b" style="left:1549px;top:382px;" width="7" height="7" viewBox="0 0 7 7"><path d="M0 0 L6.5 0 L0 6.5 Z" fill="#1f7a3c"/></svg>
<span class="t" style="left:27.50px;top:403px;font-size:12.6px;color:#000;transform:scaleX(1.0801);">TK/0</span>
<span class="t" style="left:122.80px;top:403px;font-size:12.6px;color:#000;transform:scaleX(1.2063);">staff</span>
<span class="t" style="left:207.00px;top:403px;font-size:12.6px;color:#000;transform:scaleX(1.0286);">21-100-01</span>
<span class="t" style="left:291.40px;top:403px;font-size:12.6px;color:#000;transform:scaleX(1.0887);">PartialYear</span>
<span class="t" style="left:447.20px;top:403px;font-size:12.6px;color:#000;transform:scaleX(1.0153);">0</span>
<span class="t" style="left:471.00px;top:402px;font-size:13.6px;color:#000;transform:scaleX(0.9197);">13.843.000</span>
<span class="t" style="left:543.25px;top:403px;font-size:12.6px;color:#000;transform:scaleX(1.0872);">No</span>
<span class="t" style="left:699.20px;top:403px;font-size:12.6px;color:#000;transform:scaleX(1.0153);">0</span>
<span class="t" style="left:741.20px;top:403px;font-size:12.6px;color:#000;transform:scaleX(1.0201);">1150000</span>
<span class="t" style="left:867.20px;top:403px;font-size:12.6px;color:#000;transform:scaleX(1.0153);">0</span>
<span class="t" style="left:891.60px;top:403px;font-size:12.6px;color:#000;">83055,7314</span>
<span class="t" style="left:1035.20px;top:403px;font-size:12.6px;color:#000;transform:scaleX(1.0153);">0</span>
<span class="t" style="left:1059.60px;top:403px;font-size:12.6px;color:#000;">2261498,63</span>
<span class="t" style="left:1150.60px;top:403px;font-size:12.6px;color:#000;">461420,73</span>
<span class="t" style="left:1287.20px;top:403px;font-size:12.6px;color:#000;transform:scaleX(1.0153);">0</span>
<span class="t" style="left:1383.25px;top:403px;font-size:12.6px;color:#000;transform:scaleX(1.1780);">N/A</span>
<span class="t" style="left:1539.20px;top:403px;font-size:12.6px;color:#000;transform:scaleX(1.0153);">0</span>
<span class="t" style="left:1550.75px;top:403px;font-size:12.6px;color:#000;">0508615499077000000000</span>
<span class="t" style="left:1811.00px;top:403px;font-size:12.6px;color:#000;transform:scaleX(1.0303);">2025-03-31</span>
<svg class="b" style="left:1549px;top:402px;" width="7" height="7" viewBox="0 0 7 7"><path d="M0 0 L6.5 0 L0 6.5 Z" fill="#1f7a3c"/></svg>
<span class="t" style="left:27.50px;top:423px;font-size:12.6px;color:#000;transform:scaleX(1.0847);">K/3</span>
<span class="t" style="left:122.80px;top:423px;font-size:12.6px;color:#000;transform:scaleX(1.2063);">staff</span>
<span class="t" style="left:207.00px;top:423px;font-size:12.6px;color:#000;transform:scaleX(1.0286);">21-100-01</span>
<span class="t" style="left:291.40px;top:423px;font-size:12.6px;color:#000;transform:scaleX(1.0887);">PartialYear</span>
<span class="t" style="left:447.20px;top:423px;font-size:12.6px;color:#000;transform:scaleX(1.0153);">0</span>
<span class="t" style="left:471.00px;top:422px;font-size:13.6px;color:#000;transform:scaleX(0.9197);">10.296.000</span>
<span class="t" style="left:543.25px;top:423px;font-size:12.6px;color:#000;transform:scaleX(1.0872);">No</span>
<span class="t" style="left:699.20px;top:423px;font-size:12.6px;color:#000;transform:scaleX(1.0153);">0</span>
<span class="t" style="left:783.20px;top:423px;font-size:12.6px;color:#000;transform:scaleX(1.0153);">0</span>
<span class="t" style="left:867.20px;top:423px;font-size:12.6px;color:#000;transform:scaleX(1.0153);">0</span>
<span class="t" style="left:884.60px;top:423px;font-size:12.6px;color:#000;">275442,7754</span>
<span class="t" style="left:1035.20px;top:423px;font-size:12.6px;color:#000;transform:scaleX(1.0153);">0</span>
<span class="t" style="left:1052.60px;top:423px;font-size:12.6px;color:#000;">926679,4521</span>
<span class="t" style="left:1150.60px;top:423px;font-size:12.6px;color:#000;transform:scaleX(1.0184);">441100,53</span>
<span class="t" style="left:1287.20px;top:423px;font-size:12.6px;color:#000;transform:scaleX(1.0153);">0</span>
<span class="t" style="left:1383.25px;top:423px;font-size:12.6px;color:#000;transform:scaleX(1.1780);">N/A</span>
<span class="t" style="left:1539.20px;top:423px;font-size:12.6px;color:#000;transform:scaleX(1.0153);">0</span>
<span class="t" style="left:1550.75px;top:423px;font-size:12.6px;color:#000;">0508615499077000000000</span>
<span class="t" style="left:1811.00px;top:423px;font-size:12.6px;color:#000;transform:scaleX(1.0303);">2025-03-31</span>
<svg class="b" style="left:1549px;top:422px;" width="7" height="7" viewBox="0 0 7 7"><path d="M0 0 L6.5 0 L0 6.5 Z" fill="#1f7a3c"/></svg>
<span class="t" style="left:27.50px;top:443px;font-size:12.6px;color:#000;transform:scaleX(1.0801);">TK/0</span>
<span class="t" style="left:122.80px;top:443px;font-size:12.6px;color:#000;transform:scaleX(1.2063);">staff</span>
<span class="t" style="left:207.00px;top:443px;font-size:12.6px;color:#000;transform:scaleX(1.0286);">21-100-01</span>
<span class="t" style="left:291.40px;top:443px;font-size:12.6px;color:#000;transform:scaleX(1.0887);">PartialYear</span>
<span class="t" style="left:447.20px;top:443px;font-size:12.6px;color:#000;transform:scaleX(1.0153);">0</span>
<span class="t" style="left:471.00px;top:442px;font-size:13.6px;color:#000;transform:scaleX(0.9197);">10.296.000</span>
<span class="t" style="left:543.25px;top:443px;font-size:12.6px;color:#000;transform:scaleX(1.0872);">No</span>
<span class="t" style="left:699.20px;top:443px;font-size:12.6px;color:#000;transform:scaleX(1.0153);">0</span>
<span class="t" style="left:783.20px;top:443px;font-size:12.6px;color:#000;transform:scaleX(1.0153);">0</span>
<span class="t" style="left:867.20px;top:443px;font-size:12.6px;color:#000;transform:scaleX(1.0153);">0</span>
<span class="t" style="left:884.60px;top:443px;font-size:12.6px;color:#000;">677512,1904</span>
<span class="t" style="left:1035.20px;top:443px;font-size:12.6px;color:#000;transform:scaleX(1.0153);">0</span>
<span class="t" style="left:1052.60px;top:443px;font-size:12.6px;color:#000;">832668,4932</span>
<span class="t" style="left:1150.60px;top:443px;font-size:12.6px;color:#000;">447695,28</span>
<span class="t" style="left:1287.20px;top:443px;font-size:12.6px;color:#000;transform:scaleX(1.0153);">0</span>
<span class="t" style="left:1383.25px;top:443px;font-size:12.6px;color:#000;transform:scaleX(1.1780);">N/A</span>
<span class="t" style="left:1539.20px;top:443px;font-size:12.6px;color:#000;transform:scaleX(1.0153);">0</span>
<span class="t" style="left:1550.75px;top:443px;font-size:12.6px;color:#000;">0508615499077000000000</span>
<span class="t" style="left:1811.00px;top:443px;font-size:12.6px;color:#000;transform:scaleX(1.0303);">2025-03-31</span>
<svg class="b" style="left:1549px;top:442px;" width="7" height="7" viewBox="0 0 7 7"><path d="M0 0 L6.5 0 L0 6.5 Z" fill="#1f7a3c"/></svg>
<span class="t" style="left:27.50px;top:463px;font-size:12.6px;color:#000;transform:scaleX(1.0847);">K/2</span>
<span class="t" style="left:122.80px;top:463px;font-size:12.6px;color:#000;transform:scaleX(1.2063);">staff</span>
<span class="t" style="left:207.00px;top:463px;font-size:12.6px;color:#000;transform:scaleX(1.0286);">21-100-01</span>
<span class="t" style="left:291.40px;top:463px;font-size:12.6px;color:#000;transform:scaleX(1.0887);">PartialYear</span>
<span class="t" style="left:447.20px;top:463px;font-size:12.6px;color:#000;transform:scaleX(1.0153);">0</span>
<span class="t" style="left:471.00px;top:462px;font-size:13.6px;color:#000;transform:scaleX(0.9197);">10.369.000</span>
<span class="t" style="left:543.25px;top:463px;font-size:12.6px;color:#000;transform:scaleX(1.0872);">No</span>
<span class="t" style="left:699.20px;top:463px;font-size:12.6px;color:#000;transform:scaleX(1.0153);">0</span>
<span class="t" style="left:748.20px;top:463px;font-size:12.6px;color:#000;">575000</span>
<span class="t" style="left:867.20px;top:463px;font-size:12.6px;color:#000;transform:scaleX(1.0153);">0</span>
<span class="t" style="left:891.60px;top:463px;font-size:12.6px;color:#000;">53429,4792</span>
<span class="t" style="left:1035.20px;top:463px;font-size:12.6px;color:#000;transform:scaleX(1.0153);">0</span>
<span class="t" style="left:1052.60px;top:463px;font-size:12.6px;color:#000;">435821,9178</span>
<span class="t" style="left:1150.60px;top:463px;font-size:12.6px;color:#000;">303936,96</span>
<span class="t" style="left:1287.20px;top:463px;font-size:12.6px;color:#000;transform:scaleX(1.0153);">0</span>
<span class="t" style="left:1383.25px;top:463px;font-size:12.6px;color:#000;transform:scaleX(1.1780);">N/A</span>
<span class="t" style="left:1539.20px;top:463px;font-size:12.6px;color:#000;transform:scaleX(1.0153);">0</span>
<span class="t" style="left:1550.75px;top:463px;font-size:12.6px;color:#000;">0508615499077000000000</span>
<span class="t" style="left:1811.00px;top:463px;font-size:12.6px;color:#000;transform:scaleX(1.0303);">2025-03-31</span>
<svg class="b" style="left:1549px;top:462px;" width="7" height="7" viewBox="0 0 7 7"><path d="M0 0 L6.5 0 L0 6.5 Z" fill="#1f7a3c"/></svg>
<span class="t" style="left:27.50px;top:483px;font-size:12.6px;color:#000;transform:scaleX(1.0801);">TK/0</span>
<span class="t" style="left:122.80px;top:483px;font-size:12.6px;color:#000;transform:scaleX(1.2063);">staff</span>
<span class="t" style="left:207.00px;top:483px;font-size:12.6px;color:#000;transform:scaleX(1.0286);">21-100-01</span>
<span class="t" style="left:291.40px;top:483px;font-size:12.6px;color:#000;transform:scaleX(1.0887);">PartialYear</span>
<span class="t" style="left:447.20px;top:483px;font-size:12.6px;color:#000;transform:scaleX(1.0153);">0</span>
<span class="t" style="left:478.20px;top:482px;font-size:13.6px;color:#000;transform:scaleX(0.9154);">6.659.143</span>
<span class="t" style="left:543.25px;top:483px;font-size:12.6px;color:#000;transform:scaleX(1.0872);">No</span>
<span class="t" style="left:699.20px;top:483px;font-size:12.6px;color:#000;transform:scaleX(1.0153);">0</span>
<span class="t" style="left:748.20px;top:483px;font-size:12.6px;color:#000;">550000</span>
<span class="t" style="left:867.20px;top:483px;font-size:12.6px;color:#000;transform:scaleX(1.0153);">0</span>
<span class="t" style="left:891.60px;top:483px;font-size:12.6px;color:#000;">198965,058</span>
<span class="t" style="left:1035.20px;top:483px;font-size:12.6px;color:#000;transform:scaleX(1.0153);">0</span>
<span class="t" style="left:1052.60px;top:483px;font-size:12.6px;color:#000;">450723,2877</span>
<span class="t" style="left:1157.60px;top:483px;font-size:12.6px;color:#000;">234998,1</span>
<span class="t" style="left:1287.20px;top:483px;font-size:12.6px;color:#000;transform:scaleX(1.0153);">0</span>
<span class="t" style="left:1383.25px;top:483px;font-size:12.6px;color:#000;transform:scaleX(1.1780);">N/A</span>
<span class="t" style="left:1539.20px;top:483px;font-size:12.6px;color:#000;transform:scaleX(1.0153);">0</span>
<span class="t" style="left:1550.75px;top:483px;font-size:12.6px;color:#000;">0508615499077000000000</span>
<span class="t" style="left:1811.00px;top:483px;font-size:12.6px;color:#000;transform:scaleX(1.0303);">2025-03-31</span>
<svg class="b" style="left:1549px;top:482px;" width="7" height="7" viewBox="0 0 7 7"><path d="M0 0 L6.5 0 L0 6.5 Z" fill="#1f7a3c"/></svg>
<span class="t" style="left:27.50px;top:503px;font-size:12.6px;color:#000;transform:scaleX(1.0801);">TK/0</span>
<span class="t" style="left:122.80px;top:503px;font-size:12.6px;color:#000;transform:scaleX(1.2063);">staff</span>
<span class="t" style="left:207.00px;top:503px;font-size:12.6px;color:#000;transform:scaleX(1.0286);">21-100-01</span>
<span class="t" style="left:291.40px;top:503px;font-size:12.6px;color:#000;transform:scaleX(1.0887);">PartialYear</span>
<span class="t" style="left:447.20px;top:503px;font-size:12.6px;color:#000;transform:scaleX(1.0153);">0</span>
<span class="t" style="left:478.20px;top:502px;font-size:13.6px;color:#000;transform:scaleX(0.9154);">6.659.143</span>
<span class="t" style="left:543.25px;top:503px;font-size:12.6px;color:#000;transform:scaleX(1.0872);">No</span>
<span class="t" style="left:699.20px;top:503px;font-size:12.6px;color:#000;transform:scaleX(1.0153);">0</span>
<span class="t" style="left:748.20px;top:503px;font-size:12.6px;color:#000;">725000</span>
<span class="t" style="left:867.20px;top:503px;font-size:12.6px;color:#000;transform:scaleX(1.0153);">0</span>
<span class="t" style="left:891.60px;top:503px;font-size:12.6px;color:#000;">355630,458</span>
<span class="t" style="left:1035.20px;top:503px;font-size:12.6px;color:#000;transform:scaleX(1.0153);">0</span>
<span class="t" style="left:1052.60px;top:503px;font-size:12.6px;color:#000;">450723,2877</span>
<span class="t" style="left:1157.60px;top:503px;font-size:12.6px;color:#000;">234998,1</span>
<span class="t" style="left:1287.20px;top:503px;font-size:12.6px;color:#000;transform:scaleX(1.0153);">0</span>
<span class="t" style="left:1383.25px;top:503px;font-size:12.6px;color:#000;transform:scaleX(1.1780);">N/A</span>
<span class="t" style="left:1539.20px;top:503px;font-size:12.6px;color:#000;transform:scaleX(1.0153);">0</span>
<span class="t" style="left:1550.75px;top:503px;font-size:12.6px;color:#000;">0508615499077000000000</span>
<span class="t" style="left:1811.00px;top:503px;font-size:12.6px;color:#000;transform:scaleX(1.0303);">2025-03-31</span>
<svg class="b" style="left:1549px;top:502px;" width="7" height="7" viewBox="0 0 7 7"><path d="M0 0 L6.5 0 L0 6.5 Z" fill="#1f7a3c"/></svg>
<span class="t" style="left:27.50px;top:523px;font-size:12.6px;color:#000;transform:scaleX(1.0801);">TK/0</span>
<span class="t" style="left:122.80px;top:523px;font-size:12.6px;color:#000;transform:scaleX(1.2063);">staff</span>
<span class="t" style="left:207.00px;top:523px;font-size:12.6px;color:#000;transform:scaleX(1.0286);">21-100-01</span>
<span class="t" style="left:291.40px;top:523px;font-size:12.6px;color:#000;transform:scaleX(1.0887);">PartialYear</span>
<span class="t" style="left:447.20px;top:523px;font-size:12.6px;color:#000;transform:scaleX(1.0153);">0</span>
<span class="t" style="left:478.20px;top:522px;font-size:13.6px;color:#000;transform:scaleX(0.9154);">4.962.000</span>
<span class="t" style="left:543.25px;top:523px;font-size:12.6px;color:#000;transform:scaleX(1.0872);">No</span>
<span class="t" style="left:699.20px;top:523px;font-size:12.6px;color:#000;transform:scaleX(1.0153);">0</span>
<span class="t" style="left:783.20px;top:523px;font-size:12.6px;color:#000;transform:scaleX(1.0153);">0</span>
<span class="t" style="left:867.20px;top:523px;font-size:12.6px;color:#000;transform:scaleX(1.0153);">0</span>
<span class="t" style="left:884.60px;top:523px;font-size:12.6px;color:#000;">225263,5862</span>
<span class="t" style="left:1035.20px;top:523px;font-size:12.6px;color:#000;transform:scaleX(1.0153);">0</span>
<span class="t" style="left:1119.20px;top:523px;font-size:12.6px;color:#000;transform:scaleX(1.0153);">0</span>
<span class="t" style="left:1150.60px;top:523px;font-size:12.6px;color:#000;">148852,59</span>
<span class="t" style="left:1287.20px;top:523px;font-size:12.6px;color:#000;transform:scaleX(1.0153);">0</span>
<span class="t" style="left:1383.25px;top:523px;font-size:12.6px;color:#000;transform:scaleX(1.1780);">N/A</span>
<span class="t" style="left:1539.20px;top:523px;font-size:12.6px;color:#000;transform:scaleX(1.0153);">0</span>
<span class="t" style="left:1550.75px;top:523px;font-size:12.6px;color:#000;">0508615499077000000000</span>
<span class="t" style="left:1811.00px;top:523px;font-size:12.6px;color:#000;transform:scaleX(1.0303);">2025-03-31</span>
<svg class="b" style="left:1549px;top:522px;" width="7" height="7" viewBox="0 0 7 7"><path d="M0 0 L6.5 0 L0 6.5 Z" fill="#1f7a3c"/></svg>
<span class="t" style="left:27.50px;top:543px;font-size:12.6px;color:#000;transform:scaleX(1.0801);">TK/0</span>
<span class="t" style="left:122.80px;top:543px;font-size:12.6px;color:#000;transform:scaleX(1.2063);">staff</span>
<span class="t" style="left:207.00px;top:543px;font-size:12.6px;color:#000;transform:scaleX(1.0286);">21-100-01</span>
<span class="t" style="left:291.40px;top:543px;font-size:12.6px;color:#000;transform:scaleX(1.0887);">PartialYear</span>
<span class="t" style="left:447.20px;top:543px;font-size:12.6px;color:#000;transform:scaleX(1.0153);">0</span>
<span class="t" style="left:478.20px;top:542px;font-size:13.6px;color:#000;transform:scaleX(0.9154);">2.406.567</span>
<span class="t" style="left:543.25px;top:543px;font-size:12.6px;color:#000;transform:scaleX(1.0872);">No</span>
<span class="t" style="left:699.20px;top:543px;font-size:12.6px;color:#000;transform:scaleX(1.0153);">0</span>
<span class="t" style="left:783.20px;top:543px;font-size:12.6px;color:#000;transform:scaleX(1.0153);">0</span>
<span class="t" style="left:867.20px;top:543px;font-size:12.6px;color:#000;transform:scaleX(1.0153);">0</span>
<span class="t" style="left:884.60px;top:543px;font-size:12.6px;color:#000;">203524,2956</span>
<span class="t" style="left:1035.20px;top:543px;font-size:12.6px;color:#000;transform:scaleX(1.0153);">0</span>
<span class="t" style="left:1119.20px;top:543px;font-size:12.6px;color:#000;transform:scaleX(1.0153);">0</span>
<span class="t" style="left:1150.60px;top:543px;font-size:12.6px;color:#000;">134487,42</span>
<span class="t" style="left:1287.20px;top:543px;font-size:12.6px;color:#000;transform:scaleX(1.0153);">0</span>
<span class="t" style="left:1383.25px;top:543px;font-size:12.6px;color:#000;transform:scaleX(1.1780);">N/A</span>
<span class="t" style="left:1539.20px;top:543px;font-size:12.6px;color:#000;transform:scaleX(1.0153);">0</span>
<span class="t" style="left:1550.75px;top:543px;font-size:12.6px;color:#000;">0508615499077000000000</span>
<span class="t" style="left:1811.00px;top:543px;font-size:12.6px;color:#000;transform:scaleX(1.0303);">2025-03-31</span>
<svg class="b" style="left:1549px;top:542px;" width="7" height="7" viewBox="0 0 7 7"><path d="M0 0 L6.5 0 L0 6.5 Z" fill="#1f7a3c"/></svg>
<span class="t" style="left:27.50px;top:563px;font-size:12.6px;color:#000;transform:scaleX(1.0801);">TK/0</span>
<span class="t" style="left:122.80px;top:563px;font-size:12.6px;color:#000;transform:scaleX(1.2063);">staff</span>
<span class="t" style="left:207.00px;top:563px;font-size:12.6px;color:#000;transform:scaleX(1.0286);">21-100-01</span>
<span class="t" style="left:291.40px;top:563px;font-size:12.6px;color:#000;transform:scaleX(1.0887);">PartialYear</span>
<span class="t" style="left:447.20px;top:563px;font-size:12.6px;color:#000;transform:scaleX(1.0153);">0</span>
<span class="t" style="left:478.20px;top:562px;font-size:13.6px;color:#000;transform:scaleX(0.9154);">2.631.933</span>
<span class="t" style="left:543.25px;top:563px;font-size:12.6px;color:#000;transform:scaleX(1.0872);">No</span>
<span class="t" style="left:699.20px;top:563px;font-size:12.6px;color:#000;transform:scaleX(1.0153);">0</span>
<span class="t" style="left:783.20px;top:563px;font-size:12.6px;color:#000;transform:scaleX(1.0153);">0</span>
<span class="t" style="left:867.20px;top:563px;font-size:12.6px;color:#000;transform:scaleX(1.0153);">0</span>
<span class="t" style="left:884.60px;top:563px;font-size:12.6px;color:#000;">232761,1238</span>
<span class="t" style="left:1035.20px;top:563px;font-size:12.6px;color:#000;transform:scaleX(1.0153);">0</span>
<span class="t" style="left:1119.20px;top:563px;font-size:12.6px;color:#000;transform:scaleX(1.0153);">0</span>
<span class="t" style="left:1150.60px;top:563px;font-size:12.6px;color:#000;">153806,91</span>
<span class="t" style="left:1287.20px;top:563px;font-size:12.6px;color:#000;transform:scaleX(1.0153);">0</span>
<span class="t" style="left:1383.25px;top:563px;font-size:12.6px;color:#000;transform:scaleX(1.1780);">N/A</span>
<span class="t" style="left:1539.20px;top:563px;font-size:12.6px;color:#000;transform:scaleX(1.0153);">0</span>
<span class="t" style="left:1550.75px;top:563px;font-size:12.6px;color:#000;">0508615499077000000000</span>
<span class="t" style="left:1811.00px;top:563px;font-size:12.6px;color:#000;transform:scaleX(1.0303);">2025-03-31</span>
<svg class="b" style="left:1549px;top:562px;" width="7" height="7" viewBox="0 0 7 7"><path d="M0 0 L6.5 0 L0 6.5 Z" fill="#1f7a3c"/></svg>
<span class="t" style="left:27.50px;top:583px;font-size:12.6px;color:#000;transform:scaleX(1.0801);">TK/0</span>
<span class="t" style="left:122.80px;top:583px;font-size:12.6px;color:#000;transform:scaleX(1.2063);">staff</span>
<span class="t" style="left:207.00px;top:583px;font-size:12.6px;color:#000;transform:scaleX(1.0286);">21-100-01</span>
<span class="t" style="left:291.40px;top:583px;font-size:12.6px;color:#000;transform:scaleX(1.0887);">PartialYear</span>
<span class="t" style="left:447.20px;top:583px;font-size:12.6px;color:#000;transform:scaleX(1.0153);">0</span>
<span class="t" style="left:478.20px;top:582px;font-size:13.6px;color:#000;transform:scaleX(0.9154);">2.010.800</span>
<span class="t" style="left:543.25px;top:583px;font-size:12.6px;color:#000;transform:scaleX(1.0872);">No</span>
<span class="t" style="left:699.20px;top:583px;font-size:12.6px;color:#000;transform:scaleX(1.0153);">0</span>
<span class="t" style="left:783.20px;top:583px;font-size:12.6px;color:#000;transform:scaleX(1.0153);">0</span>
<span class="t" style="left:867.20px;top:583px;font-size:12.6px;color:#000;transform:scaleX(1.0153);">0</span>
<span class="t" style="left:891.60px;top:583px;font-size:12.6px;color:#000;">177815,229</span>
<span class="t" style="left:1035.20px;top:583px;font-size:12.6px;color:#000;transform:scaleX(1.0153);">0</span>
<span class="t" style="left:1119.20px;top:583px;font-size:12.6px;color:#000;transform:scaleX(1.0153);">0</span>
<span class="t" style="left:1150.60px;top:583px;font-size:12.6px;color:#000;transform:scaleX(1.0184);">117499,05</span>
<span class="t" style="left:1287.20px;top:583px;font-size:12.6px;color:#000;transform:scaleX(1.0153);">0</span>
<span class="t" style="left:1383.25px;top:583px;font-size:12.6px;color:#000;transform:scaleX(1.1780);">N/A</span>
<span class="t" style="left:1539.20px;top:583px;font-size:12.6px;color:#000;transform:scaleX(1.0153);">0</span>
<span class="t" style="left:1550.75px;top:583px;font-size:12.6px;color:#000;">0508615499077000000000</span>
<span class="t" style="left:1811.00px;top:583px;font-size:12.6px;color:#000;transform:scaleX(1.0303);">2025-03-31</span>
<svg class="b" style="left:1549px;top:582px;" width="7" height="7" viewBox="0 0 7 7"><path d="M0 0 L6.5 0 L0 6.5 Z" fill="#1f7a3c"/></svg>
<div class="b" style="left:26px;top:381px;width:95px;height:21px;border-top:1px dotted #000;border-bottom:1px dotted #000;"></div>
<div class="b" style="left:120px;top:381px;width:1px;height:21px;background:#000;"></div>
<div class="b" style="left:1724px;top:380px;width:157px;height:23px;border:2px solid #1f7246;"></div>
<div class="b" style="left:1876px;top:398px;width:6px;height:6px;background:#fff;"></div>
<div class="b" style="left:1877px;top:399px;width:5px;height:5px;background:#1f7246;"></div>
<svg class="b" style="left:1874px;top:595px;" width="6" height="6" viewBox="0 0 6 6"><path d="M5 0 L5 5 L0 5" fill="none" stroke="#4472c4" stroke-width="2"/></svg>
<div class="b" style="left:1898px;top:259px;width:22px;height:719px;background:#171717;"></div>
<svg class="b" style="left:1903px;top:263px;" width="13" height="9" viewBox="0 0 13 9"><path d="M6.5 1 L11 7 L2 7 Z" fill="#a0a0a0" stroke="#a0a0a0" stroke-width="1" stroke-linejoin="round"/></svg>
<svg class="b" style="left:1903px;top:966px;" width="13" height="9" viewBox="0 0 13 9"><path d="M2 2 L11 2 L6.5 8 Z" fill="#a0a0a0" stroke="#a0a0a0" stroke-width="1" stroke-linejoin="round"/></svg>
<div class="b" style="left:1905px;top:276px;width:9px;height:666px;background:#a0a0a0;border-radius:4.5px;"></div>
<div class="b" style="left:0px;top:978px;width:1920px;height:32px;background:#100b0a;"></div>
<div class="b" style="left:116px;top:978px;width:53px;height:28px;background:#fff;border-radius:0 0 6px 6px;"></div>
<div class="b" style="left:110px;top:978px;width:6px;height:6px;background:#fff;"></div>
<div class="b" style="left:104px;top:978px;width:12px;height:12px;background:#100b0a;border-radius:0 6px 0 0;"></div>
<div class="b" style="left:169px;top:978px;width:6px;height:6px;background:#fff;"></div>
<div class="b" style="left:169px;top:978px;width:12px;height:12px;background:#100b0a;border-radius:6px 0 0 0;"></div>
<svg class="b" style="left:28px;top:988px;" width="8" height="12" viewBox="0 0 8 12"><path d="M6.5 1 L1.5 6 L6.5 11" fill="none" stroke="#777" stroke-width="1.3"/></svg>
<svg class="b" style="left:60px;top:988px;" width="8" height="12" viewBox="0 0 8 12"><path d="M1.5 1 L6.5 6 L1.5 11" fill="none" stroke="#777" stroke-width="1.3"/></svg>
<span class="t" style="left:124.80px;top:982px;font-size:13.3px;color:#111;transform:scaleX(1.0592);">DATA</span>
<div class="b" style="left:124px;top:1001px;width:37px;height:2px;background:#1f7246;"></div>
<span class="t" style="left:186.80px;top:984px;font-size:13.3px;color:#fff;transform:scaleX(0.9298);">BPA1</span>
<span class="t" style="left:243.60px;top:984px;font-size:13.3px;color:#fff;transform:scaleX(0.8158);">REF</span>
<div class="b" style="left:173px;top:985px;width:1px;height:17px;background:#6a6a6a;"></div>
<div class="b" style="left:230px;top:985px;width:1px;height:17px;background:#6a6a6a;"></div>
<div class="b" style="left:278px;top:985px;width:1px;height:17px;background:#6a6a6a;"></div>
<svg class="b" style="left:321px;top:988px;" width="12" height="12" viewBox="0 0 12 12"><path d="M6 0.5 V11.5 M0.5 6 H11.5" stroke="#e8e8e8" stroke-width="1.2"/></svg>
<div class="b" style="left:1168px;top:984px;width:734px;height:19px;background:#171515;border-radius:9.5px;"></div>
<div class="b" style="left:1154px;top:990px;width:2px;height:2px;background:#e0e0e0;"></div>
<div class="b" style="left:1154px;top:993.5px;width:2px;height:2px;background:#e0e0e0;"></div>
<div class="b" style="left:1154px;top:997px;width:2px;height:2px;background:#e0e0e0;"></div>
<svg class="b" style="left:1175px;top:988px;" width="10" height="12" viewBox="0 0 10 12"><path d="M8 1.8 L8 10.2 L2 6 Z" fill="#a0a0a0" stroke="#a0a0a0" stroke-width="1" stroke-linejoin="round"/></svg>
<div class="b" style="left:1387px;top:989px;width:497px;height:9px;background:#9e9e9e;border-radius:4.5px;"></div>
<svg class="b" style="left:1888px;top:988px;" width="10" height="12" viewBox="0 0 10 12"><path d="M2 1.8 L2 10.2 L8 6 Z" fill="#a0a0a0" stroke="#a0a0a0" stroke-width="1" stroke-linejoin="round"/></svg>
<div class="b" style="left:0px;top:1010px;width:1920px;height:22px;background:#131313;"></div>
<div class="b" style="left:0px;top:1010px;width:1920px;height:1px;background:#444;"></div>
<span class="t" style="left:11.50px;top:1012px;font-size:11.8px;color:#fff;transform:scaleX(0.8826);">Ready</span>
<span class="t" style="left:58.70px;top:1012px;font-size:11.8px;color:#fff;transform:scaleX(0.9287);">Calculate</span>
<svg class="b" style="left:125px;top:1014px;" width="15" height="15" viewBox="0 0 15 15"><circle cx="6" cy="2.3" r="1.7" fill="none" stroke="#e8e8e8" stroke-width="1.1"/><path d="M1 5.5 C3 4.5 4.5 6 6 6 C7.5 6 9 4.5 11 5.5 M6 6 V9 M6 9 L3.5 13.5 M6 9 L8 12" fill="none" stroke="#e8e8e8" stroke-width="1.2" stroke-linecap="round"/></svg>
<span class="t" style="left:134.80px;top:1015px;font-size:8.5px;color:#e8e8e8;font-weight:bold;">?</span>
<span class="t" style="left:143.60px;top:1012px;font-size:11.8px;color:#fff;transform:scaleX(0.9541);">Accessibility: Unavailable</span>
<div class="b" style="left:1620px;top:1011px;width:40px;height:21px;background:#2a2a2a;"></div>
<svg class="b" style="left:1632px;top:1014px;" width="15" height="14" viewBox="0 0 15 14"><rect x="0.6" y="0.6" width="13.4" height="12.4" fill="none" stroke="#f0f0f0" stroke-width="1.2"/><path d="M0.6 4.8 H14 M0.6 8.9 H14 M5 0.6 V13 M9.5 0.6 V13" stroke="#f0f0f0" stroke-width="1.2"/></svg>
<svg class="b" style="left:1672px;top:1014px;" width="16" height="14" viewBox="0 0 16 14"><rect x="0.6" y="0.6" width="14" height="12.4" fill="none" stroke="#f0f0f0" stroke-width="1.2"/><rect x="3.9" y="3.5" width="7.4" height="6.8" fill="none" stroke="#f0f0f0" stroke-width="1"/><path d="M5.6 5.8 H9.7 M5.6 8 H9.7" stroke="#f0f0f0" stroke-width="0.8"/></svg>
<svg class="b" style="left:1712px;top:1014px;" width="16" height="14" viewBox="0 0 16 14"><rect x="0.6" y="0.6" width="14" height="12.4" fill="none" stroke="#f0f0f0" stroke-width="1.2"/><path d="M5.2 0.6 V6.8 H10.2 V0.6" fill="none" stroke="#f0f0f0" stroke-width="1.2"/></svg>
<div class="b" style="left:1746px;top:1020px;width:8px;height:1px;background:#e0e0e0;"></div>
<div class="b" style="left:1759px;top:1020px;width:100px;height:1px;background:#bdbdbd;"></div>
<div class="b" style="left:1807px;top:1016px;width:5px;height:11px;background:#c8c8c8;"></div>
<svg class="b" style="left:1863px;top:1016px;" width="9" height="9" viewBox="0 0 9 9"><path d="M4.5 0.5 V8.5 M0.5 4.5 H8.5" stroke="#e0e0e0" stroke-width="1.1"/></svg>
<span class="t" style="left:1886.40px;top:1012px;font-size:11.8px;color:#fff;transform:scaleX(0.8483);">100%</span>
<div class="b" style="left:0;top:1032px;width:1920px;height:48px;background:linear-gradient(90deg,#201f1e 0%,#27221f 15%,#2c2420 33%,#2a2220 50%,#262122 62%,#1f2327 72%,#1d2126 88%,#27251f 93%,#332b1f 96.5%,#3a3020 100%);"></div>
<div class="b" style="left:0px;top:1032px;width:1920px;height:1px;background:#484442;"></div>
<svg class="b" style="left:19px;top:1048px;" width="22" height="20" viewBox="0 0 22 20"><path d="M1 9.5 C2 3 8 1 11 1 C14 1 20 3 21 9.5 C19 8 17 8 15.5 9.5 C14 8 12.5 8 11 9.5 C9.5 8 8 8 6.5 9.5 C5 8 3 8 1 9.5 Z" fill="#8cc4f4"/><path d="M11 9.5 V16.5 C11 19 7.5 19 7.5 16.5" fill="none" stroke="#8a6a6a" stroke-width="1.4"/></svg>
<div class="b" style="left:30px;top:1039px;width:16px;height:16px;background:#f4959a;border-radius:8px;"></div>
<span class="t" style="left:35.20px;top:1038px;font-size:10.5px;color:#3a1010;transform:scaleX(0.9953);">3</span>
<span class="t" style="left:50.30px;top:1038px;font-size:11.7px;color:#fff;transform:scaleX(1.0414);">Hujan datang</span>
<span class="t" style="left:50.30px;top:1054px;font-size:11.7px;color:#c8c8c8;transform:scaleX(1.0042);">Di sekitar 1 jam</span>
<svg class="b" style="left:617px;top:1044px;" width="24" height="24" viewBox="0 0 24 24"><defs><linearGradient id="wg" x1="0" y1="0" x2="1" y2="1"><stop offset="0" stop-color="#6fd3ff"/><stop offset="1" stop-color="#1493f0"/></linearGradient></defs><rect x="0" y="0" width="11.2" height="11.2" fill="url(#wg)"/><rect x="12.4" y="0" width="11.2" height="11.2" fill="url(#wg)"/><rect x="0" y="12.4" width="11.2" height="11.2" fill="url(#wg)"/><rect x="12.4" y="12.4" width="11.2" height="11.2" fill="url(#wg)"/></svg>
<div class="b" style="left:653px;top:1040px;width:220px;height:32px;background:#453e3c;border-radius:16px;border-top:1px solid #5a5250;"></div>
<svg class="b" style="left:664px;top:1048px;" width="17" height="17" viewBox="0 0 17 17"><circle cx="7" cy="7" r="5.6" fill="none" stroke="#f0f0f0" stroke-width="1.6"/><path d="M11 11 L15.5 15.5" stroke="#f0f0f0" stroke-width="1.8" stroke-linecap="round"/></svg>
<span class="t" style="left:690.30px;top:1046px;font-size:14px;color:#e6e6e6;transform:scaleX(0.9110);">Search</span>
<svg class="b" style="left:823px;top:1042px;" width="44" height="28" viewBox="0 0 44 28"><ellipse cx="22" cy="25" rx="20" ry="2.6" fill="#e8d2a0"/><path d="M8 6 L5 11 L3 14 L6 15 L9 12 L13 12 C17 10 23 10 28 12 C31 13 31 17 30 19 L30 24 L28 24 L27 19 L24 18 L23 24 L21 24 L21 18 L15 17 L14 24 L12 24 L12 16 C10 15 9 13 9 12 Z" fill="#d9d2ec" stroke="#6a5a9a" stroke-width="0.7"/><path d="M13 11 L15 16 M16 10.5 L18 16.5 M19.5 10.5 L21 17 M23 10.5 L24 17 M26 11.5 L27 17.5 M9 6 L11 10" stroke="#6a5a9a" stroke-width="1" fill="none"/></svg>
<div class="b" style="left:885px;top:1051px;width:18px;height:16px;background:#6e6e6e;border-radius:1px;"></div>
<div class="b" style="left:891px;top:1045px;width:18px;height:16px;background:linear-gradient(135deg,#fff,#dcdcdc);border-radius:1px;box-shadow:-3px 3px 0 rgba(150,150,150,0.7);"></div>
<svg class="b" style="left:929px;top:1044px;" width="25" height="24" viewBox="0 0 25 24"><path d="M0.5 3 Q0.5 1.5 2 1.5 H8 L10.5 4 H23 Q24.5 4 24.5 5.5 V20 Q24.5 21.5 23 21.5 H2 Q0.5 21.5 0.5 20 Z" fill="#f4b400"/><rect x="0.5" y="6" width="24" height="15.5" rx="1.5" fill="#ffd54a"/><rect x="5.5" y="14.5" width="14" height="8" rx="1.5" fill="#1e73d8"/><rect x="7.5" y="17.5" width="10" height="5" fill="#1560b8"/></svg>
<div class="b" style="left:938px;top:1072px;width:6px;height:3px;background:#8a8a8a;border-radius:1.5px;"></div>
<svg class="b" style="left:972px;top:1043px;" width="26" height="26" viewBox="0 0 26 26"><defs><linearGradient id="eg" x1="0" y1="0" x2="1" y2="1"><stop offset="0" stop-color="#39c0e8"/><stop offset="1" stop-color="#1560c0"/></linearGradient></defs><circle cx="13" cy="13" r="12.3" fill="url(#eg)"/><path d="M3 9 C6 2 16 0 22 5 C25.5 8 25.5 13 22.5 15 C20 16.5 15 16 15 13 C15 11.5 16 10.5 16 10.5 C13 9 7 10 3 9 Z" fill="#4fd17a"/><path d="M9 12 C7 16 9 22 16 23 C11 25 3 21 2.5 13 C4 11 7 11 9 12 Z" fill="#0d4fa8"/></svg>
<svg class="b" style="left:1017px;top:1043px;" width="24" height="25" viewBox="0 0 24 25"><path d="M7.5 6 V3.5 Q7.5 1.5 9.5 1.5 H14.5 Q16.5 1.5 16.5 3.5 V6" fill="none" stroke="#3b9ae8" stroke-width="1.8"/><rect x="0.5" y="6" width="23" height="18.5" rx="3" fill="#f3f3f3"/><rect x="7" y="10" width="4.6" height="4.6" fill="#f25022"/><rect x="12.6" y="10" width="4.6" height="4.6" fill="#7fba00"/><rect x="7" y="15.6" width="4.6" height="4.6" fill="#00a4ef"/><rect x="12.6" y="15.6" width="4.6" height="4.6" fill="#ffb900"/></svg>
<svg class="b" style="left:1060px;top:1043px;" width="26" height="26" viewBox="0 0 26 26"><path d="M13 1.5 A11.3 11.3 0 1 1 7 22.5 L1.5 24.5 L3.3 19 A11.3 11.3 0 0 1 13 1.5 Z" fill="#1fae4b"/><path d="M13 4.5 A8.3 8.3 0 1 1 8.2 19.6 L5.5 20.5 L6.4 17.8 A8.3 8.3 0 0 1 13 4.5 Z" fill="#262020"/><path d="M13 6 A6.8 6.8 0 1 1 12.9 6 Z" fill="#1fae4b"/><path d="M10 9 C9 10 9.5 12.5 11.5 14.5 C13.5 16.5 16 17 17 16 L16.5 14.5 L14.8 14 L14 14.8 C13 14.4 11.6 13 11.2 12 L12 11.2 L11.5 9.5 Z" fill="#fff"/></svg>
<svg class="b" style="left:1105px;top:1043px;" width="26" height="26" viewBox="0 0 26 26"><circle cx="13" cy="13" r="12.3" fill="#fbc116"/><path d="M13 13 L2.35 6.85 A12.3 12.3 0 0 1 23.65 6.85 Z" fill="#e33b2e"/><path d="M13 13 L2.35 6.85 A12.3 12.3 0 0 0 13 25.3 Z" fill="#2da94f"/><path d="M2.35 6.85 A12.3 12.3 0 0 1 23.65 6.85 L13 6.85 Z" fill="#e33b2e"/><circle cx="13" cy="13" r="5.8" fill="#fff"/><circle cx="13" cy="13" r="4.5" fill="#4285f4"/></svg>
<div class="b" style="left:1114px;top:1072px;width:6px;height:3px;background:#8a8a8a;border-radius:1.5px;"></div>
<svg class="b" style="left:1149px;top:1044px;" width="24" height="24" viewBox="0 0 24 24"><circle cx="12" cy="12" r="11.7" fill="#e8385a"/><path d="M7 17.5 L12 6.5 L17 17.5" fill="none" stroke="#fff" stroke-width="2.2" stroke-linejoin="miter"/></svg>
<svg class="b" style="left:1193px;top:1044px;" width="24" height="24" viewBox="0 0 24 24"><rect x="0" y="0" width="24" height="24" fill="#ef443b"/><path d="M9.5 7 L14.5 12 L9.5 17 L4.5 12 Z" fill="#fff"/><path d="M14 7.2 L18.8 12 L14 16.8 L15.2 18 L21.2 12 L15.2 6 Z" fill="#fff"/></svg>
<div class="b" style="left:1229px;top:1037px;width:39px;height:41px;background:#2e2b2b;border:1px solid #3b3838;border-radius:4px;"></div>
<svg class="b" style="left:1235px;top:1044px;" width="24" height="24" viewBox="0 0 24 24"><rect x="5" y="0.5" width="18" height="22" rx="2" fill="#1a8a3c"/><rect x="5" y="0.5" width="9" height="7" fill="#5fd38d"/><rect x="14" y="0.5" width="9" height="7" rx="1.5" fill="#9be36a"/><rect x="5" y="7.5" width="9" height="7" fill="#2e9e58"/><rect x="14" y="7.5" width="9" height="7" fill="#33c070"/><rect x="0.5" y="8.5" width="12" height="12" rx="1.5" fill="#0e6b37"/></svg>
<span class="t" style="left:1239.00px;top:1050px;font-size:10px;color:#fff;font-weight:bold;">x</span>
<div class="b" style="left:1241px;top:1073px;width:16px;height:3px;background:#4cc2ff;border-radius:1.5px;"></div>
<svg class="b" style="left:1281px;top:1043px;" width="24" height="26" viewBox="0 0 24 26"><path d="M1 1 H17 L21 5 V25 H1 Z" fill="#f4f4e8"/><rect x="1" y="13" width="20" height="12" fill="#7ec820"/><rect x="1" y="13" width="20" height="4" fill="#b8e060"/><path d="M6 7 V18 M9 7 V18 M11 12.5 H16" stroke="#222" stroke-width="1.3"/><path d="M22 3 L15 14" stroke="#e8c060" stroke-width="2"/></svg>
<div class="b" style="left:1290px;top:1072px;width:6px;height:3px;background:#8a8a8a;border-radius:1.5px;"></div>
<svg class="b" style="left:1696px;top:1052px;" width="13" height="9" viewBox="0 0 13 9"><path d="M1.3 7.2 L6.5 2 L11.7 7.2" fill="none" stroke="#f0f0f0" stroke-width="1.7"/></svg>
<svg class="b" style="left:1725px;top:1047px;" width="18" height="18" viewBox="0 0 18 18"><path d="M4.5 13.5 C1 13.5 0.8 9 4 8.6 C4 5 9 3.8 10.5 7 C13.5 5.5 15.5 8.5 14.3 10 C17 10.2 17 13.5 14.5 13.5 Z" fill="#8a8a8a"/><path d="M2.5 2 L15.5 17" stroke="#c8c8c8" stroke-width="1.2"/></svg>
<svg class="b" style="left:1757px;top:1047px;" width="18" height="18" viewBox="0 0 18 18"><rect x="0.7" y="2" width="11.5" height="10" rx="1" fill="none" stroke="#f0f0f0" stroke-width="1.3"/><path d="M3.5 16.3 H9.5 M6.5 12 V16" stroke="#f0f0f0" stroke-width="1.3"/><rect x="13.5" y="0.7" width="3" height="5" rx="0.8" fill="none" stroke="#f0f0f0" stroke-width="1.1"/><path d="M15 5.7 V16.5" stroke="#f0f0f0" stroke-width="1.2"/></svg>
<svg class="b" style="left:1781px;top:1048px;" width="18" height="16" viewBox="0 0 18 16"><path d="M1 5.5 H4 L8 2 V14 L4 10.5 H1 Z" fill="none" stroke="#f0f0f0" stroke-width="1.2" stroke-linejoin="round"/><path d="M10.3 5.5 C11.5 7 11.5 9 10.3 10.5 M12.5 3.5 C14.6 6 14.6 10 12.5 12.5 M14.8 1.5 C17.8 5 17.8 11 14.8 14.5" fill="none" stroke="#f0f0f0" stroke-width="1.1"/></svg>
<span class="t" style="left:1849.00px;top:1038px;font-size:11.6px;color:#fff;transform:scaleX(0.9944);">11:14</span>
<span class="t" style="left:1816.20px;top:1054px;font-size:11.6px;color:#fff;transform:scaleX(1.0472);">31/01/2026</span>
<svg class="b" style="left:1885px;top:1048px;" width="15" height="17" viewBox="0 0 15 17"><path d="M2 12 C3.5 10.5 3 8 3.3 6 C3.8 3 5.5 1.3 7.5 1.3 C9.5 1.3 11.2 3 11.7 6 C12 8 11.5 10.5 13 12 Z" fill="none" stroke="#f0f0f0" stroke-width="1.3" stroke-linejoin="round"/><path d="M5.8 13.8 C6.3 15.5 8.7 15.5 9.2 13.8" fill="none" stroke="#f0f0f0" stroke-width="1.2"/></svg></body></html>
